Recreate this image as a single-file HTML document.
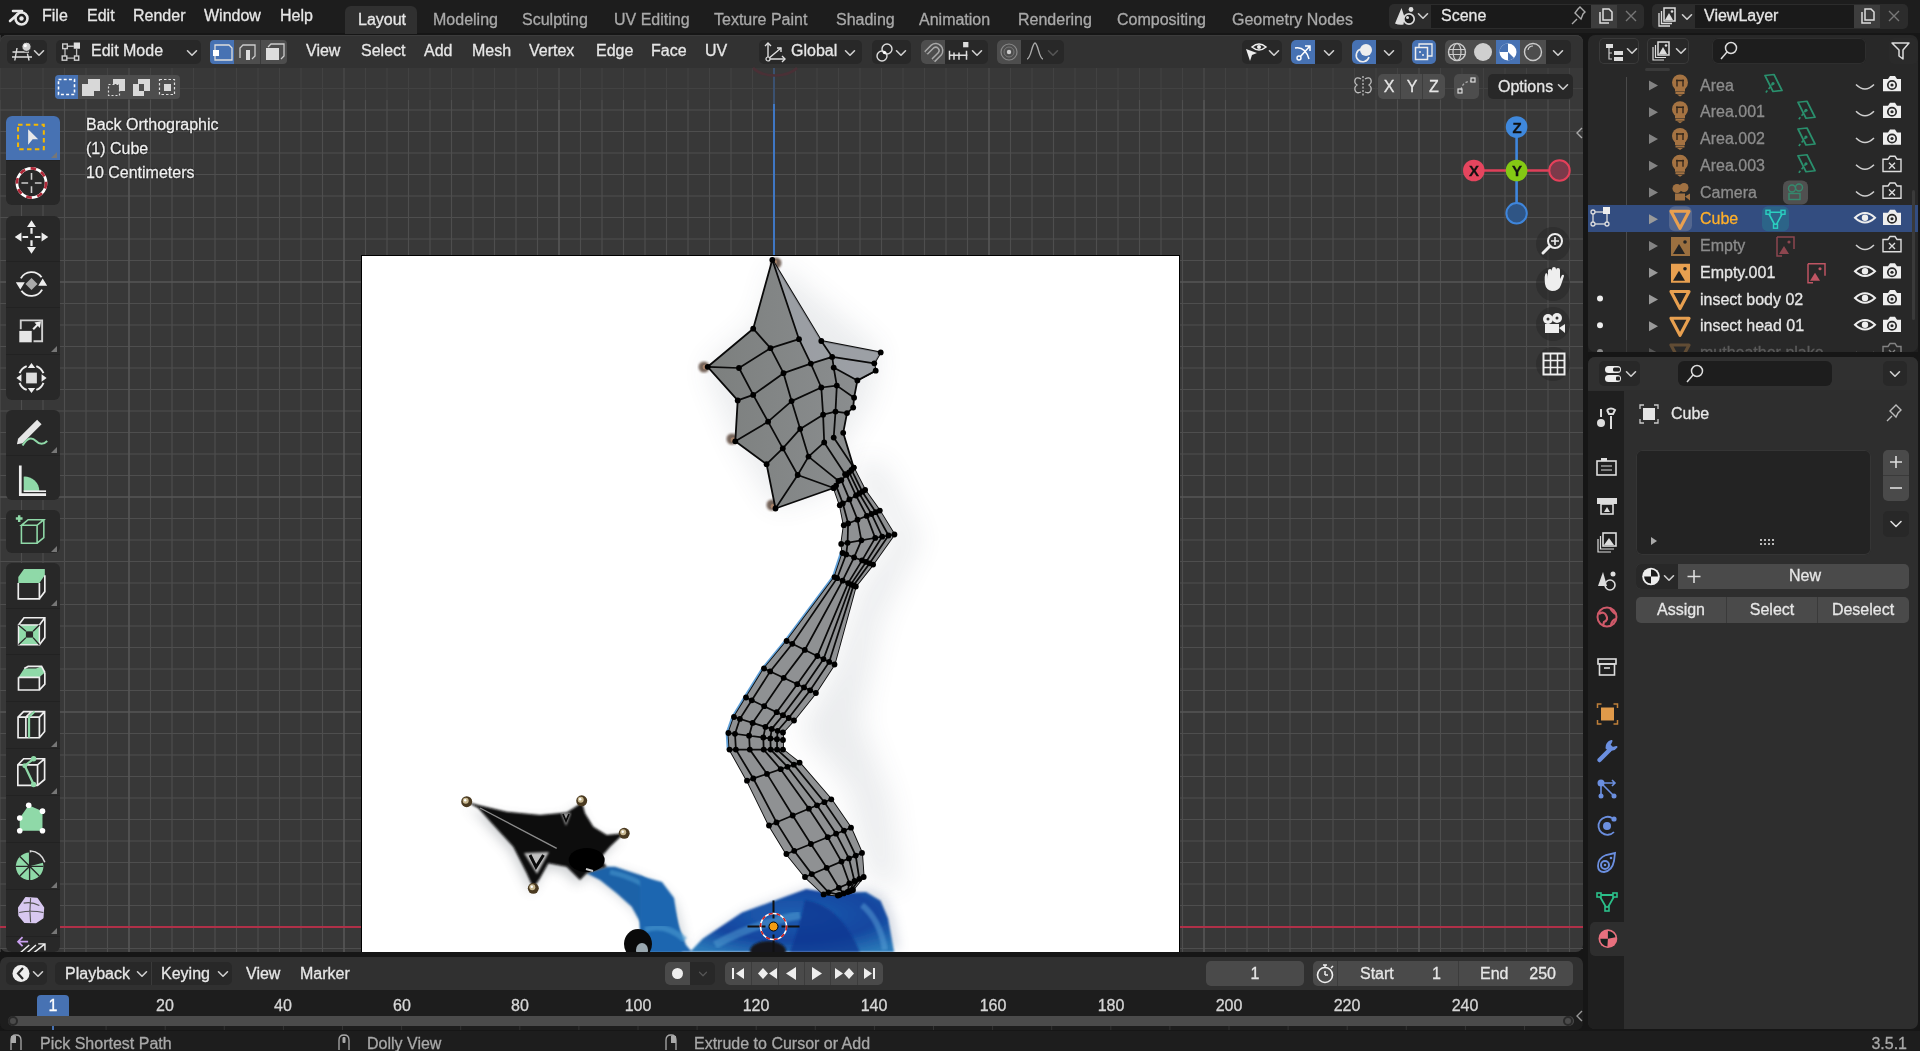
<!DOCTYPE html><html><head><meta charset="utf-8"><style>
html,body{margin:0;padding:0;width:1920px;height:1051px;overflow:hidden;background:#161616;}
.t{position:absolute;white-space:nowrap;font-family:"Liberation Sans",sans-serif;will-change:transform;-webkit-text-stroke:0.3px currentColor;}
.r{position:absolute;}
svg.r{overflow:visible;}
</style></head><body>
<div class="r" style="left:0px;top:0px;width:1920px;height:33px;background:#1d1d1d;border-radius:0px;"></div>
<svg class="r" style="left:8px;top:5px;" width="24" height="24" viewBox="0 0 24 24"><g fill="none" stroke="#e8e8e8" stroke-width="2.6"><circle cx="13.5" cy="13.5" r="6"/></g><circle cx="13.5" cy="13.5" r="2.2" fill="#e8e8e8"/><path d="M2 16 L10 9 M5 6 L14 6" stroke="#e8e8e8" stroke-width="2.6" stroke-linecap="round"/></svg>
<div class="t" style="left:42px;top:7.5px;font-size:16px;line-height:16px;color:#e6e6e6;">File</div>
<div class="t" style="left:87px;top:7.5px;font-size:16px;line-height:16px;color:#e6e6e6;">Edit</div>
<div class="t" style="left:133px;top:7.5px;font-size:16px;line-height:16px;color:#e6e6e6;">Render</div>
<div class="t" style="left:204px;top:7.5px;font-size:16px;line-height:16px;color:#e6e6e6;">Window</div>
<div class="t" style="left:280px;top:7.5px;font-size:16px;line-height:16px;color:#e6e6e6;">Help</div>
<div class="r" style="left:345px;top:6px;width:72px;height:28px;background:#303030;border-radius:6px;border-bottom-left-radius:0;border-bottom-right-radius:0;"></div>
<div class="t" style="left:357.5px;top:11.5px;font-size:16px;line-height:16px;color:#e6e6e6;">Layout</div>
<div class="t" style="left:432.5px;top:11.5px;font-size:16px;line-height:16px;color:#a9a9a9;">Modeling</div>
<div class="t" style="left:522px;top:11.5px;font-size:16px;line-height:16px;color:#a9a9a9;">Sculpting</div>
<div class="t" style="left:614px;top:11.5px;font-size:16px;line-height:16px;color:#a9a9a9;">UV Editing</div>
<div class="t" style="left:714px;top:11.5px;font-size:16px;line-height:16px;color:#a9a9a9;">Texture Paint</div>
<div class="t" style="left:836px;top:11.5px;font-size:16px;line-height:16px;color:#a9a9a9;">Shading</div>
<div class="t" style="left:919px;top:11.5px;font-size:16px;line-height:16px;color:#a9a9a9;">Animation</div>
<div class="t" style="left:1018px;top:11.5px;font-size:16px;line-height:16px;color:#a9a9a9;">Rendering</div>
<div class="t" style="left:1117px;top:11.5px;font-size:16px;line-height:16px;color:#a9a9a9;">Compositing</div>
<div class="t" style="left:1232px;top:11.5px;font-size:16px;line-height:16px;color:#a9a9a9;">Geometry Nodes</div>
<div class="r" style="left:1389px;top:4px;width:255px;height:25px;background:#2c2c2c;border-radius:5px;"></div>
<div class="r" style="left:1431px;top:5px;width:160px;height:23px;background:#1a1a1a;border-radius:0px;"></div>
<div class="r" style="left:1591px;top:5px;width:26px;height:23px;background:#3d3d3d;border-radius:0px;"></div>
<svg class="r" style="left:1392px;top:5px;" width="42" height="24" viewBox="0 0 42 24"><path d="M3 18.5 L9.5 3 L13.5 15 Q11 17 11.5 19.5 Q7 20.5 3 18.5Z" fill="#ddd"/><circle cx="19" cy="4.5" r="2.4" fill="#ddd"/><circle cx="17" cy="14" r="5.2" fill="#1d1d1d" stroke="#ddd" stroke-width="1.7"/><circle cx="15.5" cy="12.5" r="1.5" fill="#ddd"/><path d="M26.5 8.75L31 13.25L35.5 8.75" stroke="#d0d0d0" stroke-width="1.6" fill="none" stroke-linecap="round" stroke-linejoin="round"/></svg>
<div class="t" style="left:1441px;top:7.5px;font-size:16px;line-height:16px;color:#e6e6e6;">Scene</div>
<svg class="r" style="left:1596px;top:6px;" width="18" height="20" viewBox="0 0 18 20"><path d="M4 6 V17 H13 M7 3 H13 L16 6 V14 H7 Z" fill="none" stroke="#ddd" stroke-width="1.5"/></svg>
<svg class="r" style="left:1620px;top:6px;" width="22" height="20" viewBox="0 0 22 20"><path d="M6 5 L16 15 M16 5 L6 15" stroke="#777" stroke-width="1.4"/></svg>
<svg class="r" style="left:1568px;top:5px;" width="20" height="22" viewBox="0 0 20 22"><path d="M4 19 L9 14 M7 8 L13 14 L15 9 L17 7 L12 2 L10 4 Z" fill="none" stroke="#aaa" stroke-width="1.4"/></svg>
<div class="r" style="left:1652px;top:4px;width:256px;height:25px;background:#2c2c2c;border-radius:5px;"></div>
<div class="r" style="left:1695px;top:5px;width:159px;height:23px;background:#1a1a1a;border-radius:0px;"></div>
<div class="r" style="left:1854px;top:5px;width:26px;height:23px;background:#3d3d3d;border-radius:0px;"></div>
<svg class="r" style="left:1656px;top:5px;" width="40" height="24" viewBox="0 0 40 24"><path d="M3 8 V21 H14 M5.5 6 V18.5 H16" fill="none" stroke="#ddd" stroke-width="1.3"/><rect x="8" y="3" width="11" height="13" fill="none" stroke="#ddd" stroke-width="1.5"/><path d="M9 15 L13 8 L17 15Z" fill="#ddd"/><circle cx="16" cy="6.5" r="1.3" fill="#ddd"/><path d="M26.5 9.75L31 14.25L35.5 9.75" stroke="#d0d0d0" stroke-width="1.6" fill="none" stroke-linecap="round" stroke-linejoin="round"/></svg>
<div class="t" style="left:1704px;top:7.5px;font-size:16px;line-height:16px;color:#e6e6e6;">ViewLayer</div>
<svg class="r" style="left:1858px;top:6px;" width="18" height="20" viewBox="0 0 18 20"><path d="M4 6 V17 H13 M7 3 H13 L16 6 V14 H7 Z" fill="none" stroke="#ddd" stroke-width="1.5"/></svg>
<svg class="r" style="left:1883px;top:6px;" width="22" height="20" viewBox="0 0 22 20"><path d="M6 5 L16 15 M16 5 L6 15" stroke="#777" stroke-width="1.4"/></svg>
<div class="r" style="left:0px;top:35px;width:1583px;height:917px;background:#383838;border-radius:7px;"></div>
<svg class="r" style="left:0px;top:35px;overflow:hidden" width="1583" height="917" viewBox="0 0 1583 917"><path d="M0.0 0V917 M21.5 0V917 M43.0 0V917 M64.5 0V917 M86.0 0V917 M107.5 0V917 M129.0 0V917 M150.5 0V917 M172.0 0V917 M193.5 0V917 M215.0 0V917 M236.5 0V917 M258.0 0V917 M279.5 0V917 M301.0 0V917 M322.5 0V917 M344.0 0V917 M365.5 0V917 M387.0 0V917 M408.5 0V917 M430.0 0V917 M451.5 0V917 M473.0 0V917 M494.5 0V917 M516.0 0V917 M537.5 0V917 M559.0 0V917 M580.5 0V917 M602.0 0V917 M623.5 0V917 M645.0 0V917 M666.5 0V917 M688.0 0V917 M709.5 0V917 M731.0 0V917 M752.5 0V917 M774.0 0V917 M795.5 0V917 M817.0 0V917 M838.5 0V917 M860.0 0V917 M881.5 0V917 M903.0 0V917 M924.5 0V917 M946.0 0V917 M967.5 0V917 M989.0 0V917 M1010.5 0V917 M1032.0 0V917 M1053.5 0V917 M1075.0 0V917 M1096.5 0V917 M1118.0 0V917 M1139.5 0V917 M1161.0 0V917 M1182.5 0V917 M1204.0 0V917 M1225.5 0V917 M1247.0 0V917 M1268.5 0V917 M1290.0 0V917 M1311.5 0V917 M1333.0 0V917 M1354.5 0V917 M1376.0 0V917 M1397.5 0V917 M1419.0 0V917 M1440.5 0V917 M1462.0 0V917 M1483.5 0V917 M1505.0 0V917 M1526.5 0V917 M1548.0 0V917 M1569.5 0V917 M0 10.5H1583 M0 32.0H1583 M0 53.5H1583 M0 75.0H1583 M0 96.5H1583 M0 118.0H1583 M0 139.5H1583 M0 161.0H1583 M0 182.5H1583 M0 204.0H1583 M0 225.5H1583 M0 247.0H1583 M0 268.5H1583 M0 290.0H1583 M0 311.5H1583 M0 333.0H1583 M0 354.5H1583 M0 376.0H1583 M0 397.5H1583 M0 419.0H1583 M0 440.5H1583 M0 462.0H1583 M0 483.5H1583 M0 505.0H1583 M0 526.5H1583 M0 548.0H1583 M0 569.5H1583 M0 591.0H1583 M0 612.5H1583 M0 634.0H1583 M0 655.5H1583 M0 677.0H1583 M0 698.5H1583 M0 720.0H1583 M0 741.5H1583 M0 763.0H1583 M0 784.5H1583 M0 806.0H1583 M0 827.5H1583 M0 849.0H1583 M0 870.5H1583 M0 892.0H1583 M0 913.5H1583" stroke="#4e4e4e" stroke-width="1.15" fill="none"/><path d="M129.0 0V917 M344.0 0V917 M559.0 0V917 M989.0 0V917 M1204.0 0V917 M1419.0 0V917 M0 247.0H1583 M0 462.0H1583 M0 677.0H1583" stroke="#5a5a5a" stroke-width="1.15" fill="none"/></svg>
<div class="r" style="left:0px;top:68px;width:1583px;height:32px;background:rgba(56,56,56,0.55);border-radius:0px;"></div>
<div class="r" style="left:0px;top:35px;width:1583px;height:33px;background:#323232;border-radius:7px;border-bottom-left-radius:0;border-bottom-right-radius:0;box-shadow:inset 0 1px 0 #3c3c3c;"></div>
<div class="r" style="left:7px;top:40px;width:40px;height:24px;background:#282828;border-radius:5px;"></div>
<svg class="r" style="left:7px;top:40px;" width="40" height="24" viewBox="0 0 40 24"><path d="M5.5 12 H22 M5 17 H25 M10 8 L7.8 20.5 M20.4 13.6 L22.1 20.5" stroke="#ddd" stroke-width="1.4" fill="none"/><circle cx="19.5" cy="6.8" r="4.6" fill="#d0d0d0" stroke="#282828" stroke-width="1"/><circle cx="18.3" cy="5.6" r="1.6" fill="#fff"/><path d="M27.5 10.75L32 15.25L36.5 10.75" stroke="#d0d0d0" stroke-width="1.6" fill="none" stroke-linecap="round" stroke-linejoin="round"/></svg>
<div class="r" style="left:56px;top:40px;width:145px;height:24px;background:#282828;border-radius:5px;"></div>
<svg class="r" style="left:60px;top:40px;" width="30" height="24" viewBox="0 0 30 24"><path d="M7.5 6.25H13.75 M5 8.75V16.25 M6.9 18.1H14.4 M16.6 8.75V16.25" stroke="#bbb" stroke-width="1.3"/><g fill="none" stroke="#ccc" stroke-width="1.4"><rect x="2.7" y="4" width="4.6" height="4.6"/><rect x="2.2" y="16" width="4.6" height="4.2"/><rect x="14.5" y="16" width="4.2" height="4.2"/></g><rect x="13.75" y="2.5" width="6.25" height="6.25" fill="#e0e0e0"/></svg>
<div class="t" style="left:91px;top:42.5px;font-size:16px;line-height:16px;color:#e6e6e6;">Edit Mode</div>
<svg class="r" style="left:180px;top:40px;" width="20" height="24" viewBox="0 0 20 24"><path d="M7.5 10.75L12 15.25L16.5 10.75" stroke="#d0d0d0" stroke-width="1.6" fill="none" stroke-linecap="round" stroke-linejoin="round"/></svg>
<div class="r" style="left:210px;top:40px;width:24px;height:24px;background:#4772b3;border-radius:4px;border-top-right-radius:0;border-bottom-right-radius:0;"></div>
<div class="r" style="left:234px;top:40px;width:53px;height:24px;background:#4d4d4d;border-radius:4px;border-top-left-radius:0;border-bottom-left-radius:0;"></div>
<div class="r" style="left:260px;top:40px;width:1px;height:24px;background:#3a3a3a;border-radius:0px;"></div>
<svg class="r" style="left:210px;top:40px;" width="80" height="24" viewBox="0 0 80 24"><path d="M5 5 H19 L22 8 V20 H5 Z" fill="none" stroke="#ddd" stroke-width="1.3"/><rect x="3" y="10" width="6" height="6" fill="#fff"/><path d="M30 18 V8 L33 5 H45 V16 L42 19" fill="none" stroke="#ccc" stroke-width="1.3"/><rect x="36" y="10" width="4" height="10" fill="#ddd"/><path d="M58 7 L61 4 H74 V16 L71 19" fill="none" stroke="#ccc" stroke-width="1.3"/><rect x="56" y="8" width="13" height="12" fill="#ddd"/></svg>
<div class="t" style="left:306px;top:42.5px;font-size:16px;line-height:16px;color:#e6e6e6;">View</div>
<div class="t" style="left:361px;top:42.5px;font-size:16px;line-height:16px;color:#e6e6e6;">Select</div>
<div class="t" style="left:424px;top:42.5px;font-size:16px;line-height:16px;color:#e6e6e6;">Add</div>
<div class="t" style="left:472px;top:42.5px;font-size:16px;line-height:16px;color:#e6e6e6;">Mesh</div>
<div class="t" style="left:529px;top:42.5px;font-size:16px;line-height:16px;color:#e6e6e6;">Vertex</div>
<div class="t" style="left:596px;top:42.5px;font-size:16px;line-height:16px;color:#e6e6e6;">Edge</div>
<div class="t" style="left:651px;top:42.5px;font-size:16px;line-height:16px;color:#e6e6e6;">Face</div>
<div class="t" style="left:705px;top:42.5px;font-size:16px;line-height:16px;color:#e6e6e6;">UV</div>
<div class="r" style="left:759px;top:40px;width:103px;height:24px;background:#282828;border-radius:5px;"></div>
<svg class="r" style="left:759px;top:40px;" width="36" height="24" viewBox="0 0 36 24"><path d="M9 3 V19 H26 M9 19 L22 8" stroke="#ddd" stroke-width="1.4" fill="none"/><path d="M6 6 L9 3 L12 6 M23 16 L26 19 L23 22 M18 8 H22 V12" stroke="#ddd" stroke-width="1.4" fill="none"/><circle cx="9" cy="19" r="2" fill="#282828" stroke="#ddd" stroke-width="1.2"/></svg>
<div class="t" style="left:791px;top:42.5px;font-size:16px;line-height:16px;color:#e6e6e6;">Global</div>
<svg class="r" style="left:840px;top:40px;" width="20" height="24" viewBox="0 0 20 24"><path d="M5.5 10.75L10 15.25L14.5 10.75" stroke="#d0d0d0" stroke-width="1.6" fill="none" stroke-linecap="round" stroke-linejoin="round"/></svg>
<div class="r" style="left:872px;top:40px;width:39px;height:24px;background:#282828;border-radius:5px;"></div>
<svg class="r" style="left:872px;top:40px;" width="40" height="24" viewBox="0 0 40 24"><circle cx="10" cy="16" r="5" fill="none" stroke="#ddd" stroke-width="1.4"/><circle cx="15" cy="9" r="5" fill="none" stroke="#ddd" stroke-width="1.4"/><circle cx="12.5" cy="12.5" r="1.6" fill="#fff"/><path d="M24.5 10.75L29 15.25L33.5 10.75" stroke="#d0d0d0" stroke-width="1.6" fill="none" stroke-linecap="round" stroke-linejoin="round"/></svg>
<div class="r" style="left:921px;top:40px;width:67px;height:24px;background:#282828;border-radius:5px;"></div>
<div class="r" style="left:921px;top:40px;width:24px;height:24px;background:#4d4d4d;border-radius:5px;border-top-right-radius:0;border-bottom-right-radius:0;"></div>
<svg class="r" style="left:921px;top:40px;" width="68" height="24" viewBox="0 0 68 24"><path d="M5 13 L11.5 6.5 A5.2 5.2 0 0 1 18.8 13.8 L12.3 20.3" stroke="#a8a8a8" stroke-width="5.2" fill="none"/><path d="M5 13 L11.5 6.5 A5.2 5.2 0 0 1 18.8 13.8 L12.3 20.3" stroke="#4d4d4d" stroke-width="2.2" fill="none"/><path d="M28 15.2 H46.5 M28.5 10.8 V19.7 M33 12.5 V19.7 M38 12.5 V19.7 M45.5 10.8 V19.7" stroke="#ddd" stroke-width="1.5" fill="none"/><rect x="42.1" y="2" width="5.3" height="5.3" fill="#ddd"/><path d="M51.5 10.75L56 15.25L60.5 10.75" stroke="#d0d0d0" stroke-width="1.6" fill="none" stroke-linecap="round" stroke-linejoin="round"/></svg>
<div class="r" style="left:997px;top:40px;width:67px;height:24px;background:#282828;border-radius:5px;"></div>
<div class="r" style="left:997px;top:40px;width:24px;height:24px;background:#4d4d4d;border-radius:5px;border-top-right-radius:0;border-bottom-right-radius:0;"></div>
<svg class="r" style="left:997px;top:40px;" width="68" height="24" viewBox="0 0 68 24"><circle cx="12" cy="12" r="8" fill="none" stroke="#888" stroke-width="1.2"/><circle cx="12" cy="12" r="5" fill="none" stroke="#777" stroke-width="1"/><circle cx="12" cy="12" r="2.2" fill="#ccc"/><path d="M30 19 C34 19 35 3 38 3 C41 3 42 19 46 19" stroke="#aaa" stroke-width="1.4" fill="none"/><path d="M51.5 10.75L56 15.25L60.5 10.75" stroke="#555" stroke-width="1.6" fill="none" stroke-linecap="round" stroke-linejoin="round"/></svg>
<div class="r" style="left:1242px;top:40px;width:40px;height:24px;background:#282828;border-radius:5px;"></div>
<svg class="r" style="left:1242px;top:40px;" width="40" height="24" viewBox="0 0 40 24"><path d="M4 9 L15 13 L10 15 L8 21 Z" fill="#eee"/><path d="M10 7 Q17 1 24 7 Q17 13 10 7Z" fill="none" stroke="#eee" stroke-width="1.6"/><circle cx="17" cy="7" r="2" fill="#eee"/><path d="M27.5 10.75L32 15.25L36.5 10.75" stroke="#d0d0d0" stroke-width="1.6" fill="none" stroke-linecap="round" stroke-linejoin="round"/></svg>
<div class="r" style="left:1291px;top:40px;width:51px;height:24px;background:#282828;border-radius:5px;"></div>
<div class="r" style="left:1291px;top:40px;width:24px;height:24px;background:#4772b3;border-radius:5px;border-top-right-radius:0;border-bottom-right-radius:0;"></div>
<svg class="r" style="left:1291px;top:40px;" width="52" height="24" viewBox="0 0 52 24"><path d="M4 8 Q14 6 18 19" stroke="#fff" stroke-width="1.5" fill="none"/><path d="M9 17 L19 6 M14 6 H19 V11" stroke="#fff" stroke-width="1.5" fill="none"/><circle cx="8" cy="18" r="2" fill="#4772b3" stroke="#fff" stroke-width="1.4"/><path d="M33.5 10.75L38 15.25L42.5 10.75" stroke="#d0d0d0" stroke-width="1.6" fill="none" stroke-linecap="round" stroke-linejoin="round"/></svg>
<div class="r" style="left:1352px;top:40px;width:50px;height:24px;background:#282828;border-radius:5px;"></div>
<div class="r" style="left:1352px;top:40px;width:24px;height:24px;background:#4772b3;border-radius:5px;border-top-right-radius:0;border-bottom-right-radius:0;"></div>
<svg class="r" style="left:1352px;top:40px;" width="52" height="24" viewBox="0 0 52 24"><circle cx="14" cy="10" r="6" fill="#eee"/><path d="M9 9 A6.5 6.5 0 1 0 17 17" stroke="#eee" stroke-width="1.6" fill="none"/><path d="M32.5 10.75L37 15.25L41.5 10.75" stroke="#d0d0d0" stroke-width="1.6" fill="none" stroke-linecap="round" stroke-linejoin="round"/></svg>
<div class="r" style="left:1412px;top:40px;width:24px;height:24px;background:#4772b3;border-radius:5px;"></div>
<svg class="r" style="left:1412px;top:40px;" width="24" height="24" viewBox="0 0 24 24"><rect x="3.5" y="7.5" width="12" height="12" fill="none" stroke="#eee" stroke-width="1.5"/><path d="M7 7 V4 H20 V16 H16" stroke="#eee" stroke-width="1.3" fill="none"/><circle cx="8" cy="12" r="1" fill="#eee"/><circle cx="11" cy="15" r="1" fill="#eee"/></svg>
<div class="r" style="left:1445px;top:40px;width:126px;height:24px;background:#282828;border-radius:5px;"></div>
<div class="r" style="left:1445px;top:40px;width:101px;height:24px;background:#4d4d4d;border-radius:5px;border-top-right-radius:0;border-bottom-right-radius:0;"></div>
<div class="r" style="left:1496px;top:40px;width:24px;height:24px;background:#4772b3;border-radius:0px;"></div>
<svg class="r" style="left:1445px;top:40px;" width="126" height="24" viewBox="0 0 126 24"><circle cx="12" cy="12" r="8.5" fill="none" stroke="#ccc" stroke-width="1.4"/><ellipse cx="12" cy="12" rx="4" ry="8.5" fill="none" stroke="#ccc" stroke-width="1.2"/><path d="M3.5 9.5 H20.5 M3.5 14.5 H20.5" stroke="#ccc" stroke-width="1.2"/><circle cx="38" cy="12" r="9" fill="#cfcfcf"/><circle cx="63" cy="12" r="8.5" fill="#fff"/><path d="M63 12 V3.5 A8.5 8.5 0 0 0 54.5 12 Z" fill="#4772b3"/><path d="M63 12 L69 18 A8.5 8.5 0 0 1 63 20.5Z" fill="#4772b3"/><circle cx="88" cy="12" r="8.5" fill="none" stroke="#ccc" stroke-width="1.4"/><path d="M83 10 A5 5 0 0 1 88 6" stroke="#ccc" stroke-width="1.2" fill="none"/><path d="M108.5 10.75L113 15.25L117.5 10.75" stroke="#d0d0d0" stroke-width="1.6" fill="none" stroke-linecap="round" stroke-linejoin="round"/></svg>
<div class="r" style="left:55px;top:75px;width:125px;height:24px;background:#4d4d4d;border-radius:4px;"></div>
<div class="r" style="left:55px;top:75px;width:23px;height:24px;background:#4772b3;border-radius:4px;border-top-right-radius:0;border-bottom-right-radius:0;"></div>
<svg class="r" style="left:55px;top:75px;" width="125" height="24" viewBox="0 0 125 24"><rect x="3.5" y="4.5" width="16" height="15" fill="none" stroke="#fff" stroke-width="1.6" stroke-dasharray="3 2.2"/><path d="M27 9 H33 V4 H45 V16 H39 V21 H27 Z" fill="#d8d8d8"/><path d="M58 4 H70 V16 H64 V9 H58Z" fill="#d8d8d8"/><rect x="53.5" y="9.5" width="11" height="11" fill="none" stroke="#ddd" stroke-width="1.2" stroke-dasharray="2 2"/><path d="M83 4 H95 V16 H89 V9 H83Z M78 9 H84 V16 H89 V21 H78Z" fill="#d8d8d8"/><rect x="104.5" y="4.5" width="15" height="15" fill="none" stroke="#ddd" stroke-width="1.2" stroke-dasharray="2.5 2"/><rect x="109" y="9" width="7" height="7" fill="#d8d8d8"/></svg>
<svg class="r" style="left:1352px;top:74px;" width="22" height="24" viewBox="0 0 22 24"><path d="M11 2 V22" stroke="#ccc" stroke-width="1.2" stroke-dasharray="2 1.5"/><path d="M9 5 C3 1 1 8 5 11 C1 14 3 21 9 18 M13 5 C19 1 21 8 17 11 C21 14 19 21 13 18" stroke="#bbb" stroke-width="1.3" fill="none"/></svg>
<div class="r" style="left:1378px;top:74px;width:67px;height:25px;background:#4d4d4d;border-radius:5px;"></div>
<div class="r" style="left:1400px;top:74px;width:1px;height:25px;background:#3d3d3d;border-radius:0px;"></div>
<div class="r" style="left:1422px;top:74px;width:1px;height:25px;background:#3d3d3d;border-radius:0px;"></div>
<div class="t" style="left:1239px;width:300px;text-align:center;top:78.5px;font-size:16px;line-height:16px;color:#e6e6e6;">X</div>
<div class="t" style="left:1261.5px;width:300px;text-align:center;top:78.5px;font-size:16px;line-height:16px;color:#e6e6e6;">Y</div>
<div class="t" style="left:1284px;width:300px;text-align:center;top:78.5px;font-size:16px;line-height:16px;color:#e6e6e6;">Z</div>
<div class="r" style="left:1454px;top:74px;width:25px;height:25px;background:#4d4d4d;border-radius:5px;"></div>
<svg class="r" style="left:1454px;top:74px;" width="25" height="24" viewBox="0 0 25 24"><path d="M7 16 Q8 8 17 7" stroke="#aaa" stroke-width="1.3" fill="none" stroke-dasharray="2.5 2"/><rect x="4" y="15" width="4" height="4" fill="none" stroke="#ddd" stroke-width="1.2"/><rect x="17" y="4" width="4" height="4" fill="none" stroke="#ddd" stroke-width="1.2"/></svg>
<div class="r" style="left:1488px;top:74px;width:85px;height:25px;background:#282828;border-radius:5px;"></div>
<div class="t" style="left:1498px;top:78.5px;font-size:16px;line-height:16px;color:#e6e6e6;">Options</div>
<svg class="r" style="left:1553px;top:74px;" width="20" height="24" viewBox="0 0 20 24"><path d="M5.5 10.75L10 15.25L14.5 10.75" stroke="#d0d0d0" stroke-width="1.6" fill="none" stroke-linecap="round" stroke-linejoin="round"/></svg>
<div class="r" style="left:773px;top:68px;width:2px;height:188px;background:#3f77c4;border-radius:0px;"></div>
<div class="r" style="left:773px;top:68px;width:2px;height:36px;background:rgba(56,56,56,0.6);border-radius:0px;"></div>
<div class="r" style="left:0px;top:926px;width:362px;height:2px;background:#b03048;border-radius:0px;"></div>
<div class="r" style="left:1179px;top:926px;width:404px;height:2px;background:#b03048;border-radius:0px;"></div>
<svg class="r" style="left:745px;top:66px;" width="60" height="20" viewBox="0 0 60 20"><path d="M8 2 A26 16 0 0 0 52 2" stroke="#4a3036" stroke-width="2.5" fill="none"/></svg>
<div class="r" style="left:361px;top:255px;width:819px;height:697px;background:#000;border-radius:0px;"></div>
<div class="r" style="left:362px;top:256px;width:817px;height:696px;background:#ffffff;border-radius:0px;"></div>
<svg class="r" style="left:362px;top:256px;overflow:hidden" width="817" height="696" viewBox="0 0 817 696"><defs><radialGradient id="bl" cx="0.5" cy="0.4" r="0.7"><stop offset="0" stop-color="#1f5fb0"/><stop offset="0.6" stop-color="#1446a0"/><stop offset="1" stop-color="#2a78b8"/></radialGradient><linearGradient id="mg" x1="0" y1="0" x2="1" y2="0"><stop offset="0" stop-color="#7c7f7e"/><stop offset="1" stop-color="#8e9193"/></linearGradient><filter id="bl3"><feGaussianBlur stdDeviation="6"/></filter><filter id="bl9" x="-50%" y="-50%" width="200%" height="200%"><feGaussianBlur stdDeviation="14"/></filter><filter id="bl1"><feGaussianBlur stdDeviation="1.2"/></filter></defs><g filter="url(#bl3)" opacity="0.3"><polygon points="101.7,550.7 113.3,554.0 141.7,560.7 175.0,564.0 201.7,561.5 213.3,554.0 216.7,549.8 220.0,562.3 228.3,575.7 241.7,584.0 259.2,582.3 245.0,595.7 235.0,607.3 241.7,615.7 221.7,622.3 215.0,629.0 201.7,615.7 183.3,612.3 175.0,627.3 168.3,637.3 161.7,622.3 148.3,595.7 130.0,575.7 113.3,557.3" fill="#606870"/><polygon points="248.7,614.7 257.0,614.7 282.0,623.0 302.0,634.7 313.7,648.0 317.0,661.3 320.3,673.0 324.0,700.0 287.0,700.0 282.0,669.7 273.7,654.7 258.7,641.3 242.0,628.0 228.7,621.3" fill="#607080"/></g><polygon points="244.7,610.7 253.0,610.7 278.0,619.0 298.0,630.7 309.7,644.0 313.0,657.3 316.3,669.0 320.0,696.0 283.0,696.0 278.0,665.7 269.7,650.7 254.7,637.3 238.0,624.0 224.7,617.3" fill="#1d62a8" filter="url(#bl1)"/><path d="M248 616 Q283 624 300 644" stroke="#4a9ad0" stroke-width="5" fill="none" opacity="0.55" filter="url(#bl1)"/><g filter="url(#bl3)" opacity="0.3"><polygon points="333.0,694.0 345.7,680.7 385.0,654.5 428.8,638.5 449.3,631.0 473.0,635.0 509.0,634.0 523.6,642.8 531.0,660.3 536.8,692.4 537.0,694.0" fill="#7080a0"/></g><polygon points="328.0,696.0 340.7,682.7 380.0,656.5 423.8,640.5 444.3,633.0 468.0,637.0 504.0,636.0 518.6,644.8 526.0,662.3 531.8,694.4 532.0,696.0" fill="url(#bl)" filter="url(#bl1)"/><path d="M443 644 Q478 649 498 696 L428 696 Q438 669 443 644Z" fill="#0c3690" opacity="0.7" filter="url(#bl1)"/><path d="M353 689 Q388 669 438 659" stroke="#5aa8d8" stroke-width="8" fill="none" opacity="0.45" filter="url(#bl1)"/><polygon points="278.0,620.0 300.0,626.0 312.0,642.0 316.0,669.0 324.0,689.0 330.0,696.0 278.0,696.0" fill="#1f66b0" filter="url(#bl1)"/><path d="M283 674 Q303 666 323 684" stroke="#4a9ad0" stroke-width="6" fill="none" opacity="0.6" filter="url(#bl1)"/><path d="M500 649 Q518 664 523 694" stroke="#5aa0d8" stroke-width="6" fill="none" opacity="0.5" filter="url(#bl1)"/><ellipse cx="276" cy="688" rx="14" ry="15" fill="#0a0a0a"/><ellipse cx="280" cy="694" rx="6" ry="7" fill="#9aa8b0"/><ellipse cx="406" cy="695" rx="18" ry="10" fill="#15151c" filter="url(#bl1)"/><polygon points="104.7,545.7 116.3,549.0 144.7,555.7 178.0,559.0 204.7,556.5 216.3,549.0 219.7,544.8 223.0,557.3 231.3,570.7 244.7,579.0 262.2,577.3 248.0,590.7 238.0,602.3 244.7,610.7 224.7,617.3 218.0,624.0 204.7,610.7 186.3,607.3 178.0,622.3 171.3,632.3 164.7,617.3 151.3,590.7 133.0,570.7 116.3,552.3" fill="#080808" filter="url(#bl1)"/><ellipse cx="224.70000000000005" cy="604" rx="18" ry="12" fill="#000"/><path d="M118 552 L194.70000000000005 592.3" stroke="#9a9a9a" stroke-width="1.4" opacity="0.9"/><polygon points="162.0,597.0 187.0,596.0 175.0,618.0" fill="#c0c0c0" filter="url(#bl1)"/><path d="M168 599 L174 611 L181.5 599" stroke="#0a0a0a" stroke-width="3" fill="none"/><polygon points="199.0,557.0 209.0,557.0 204.0,570.0" fill="#9a9a9a" filter="url(#bl1)"/><path d="M201 558 L204 565 L207 558" stroke="#0a0a0a" stroke-width="1.8" fill="none"/><path d="M224 613 L231 615" stroke="#ccc" stroke-width="2"/><circle cx="104.69999999999999" cy="545.7" r="5.5" fill="#4a3a20"/><circle cx="103.69999999999999" cy="544.7" r="3" fill="#c8b890"/><circle cx="103.19999999999999" cy="544.2" r="1.2" fill="#fff"/><circle cx="219.70000000000005" cy="544.8" r="5.5" fill="#4a3a20"/><circle cx="218.70000000000005" cy="543.8" r="3" fill="#c8b890"/><circle cx="218.20000000000005" cy="543.3" r="1.2" fill="#fff"/><circle cx="262.20000000000005" cy="577.3" r="5.5" fill="#4a3a20"/><circle cx="261.20000000000005" cy="576.3" r="3" fill="#c8b890"/><circle cx="260.70000000000005" cy="575.8" r="1.2" fill="#fff"/><circle cx="171.29999999999995" cy="632.3" r="5.5" fill="#4a3a20"/><circle cx="170.29999999999995" cy="631.3" r="3" fill="#c8b890"/><circle cx="169.79999999999995" cy="630.8" r="1.2" fill="#fff"/><path d="M479.0 297.0 L471.0 321.1 L423.1 385.0 L400.5 412.5 L382.5 441.5 L370.5 461.0 L364.9 477.0 L366.0 493.6" stroke="#3a8ad0" stroke-width="2.5" fill="none" opacity="0.8"/><circle cx="414" cy="7" r="5.5" fill="#4a3020" opacity="0.75" filter="url(#bl1)"/><circle cx="412.4" cy="5.8" r="2.5" fill="#c09070" opacity="0.7"/><circle cx="342" cy="111" r="5.5" fill="#4a3020" opacity="0.75" filter="url(#bl1)"/><circle cx="343.2" cy="111.0" r="2.5" fill="#c09070" opacity="0.7"/><circle cx="370" cy="183" r="5.5" fill="#4a3020" opacity="0.75" filter="url(#bl1)"/><circle cx="371.2" cy="183.8" r="2.5" fill="#c09070" opacity="0.7"/><circle cx="410" cy="249" r="5.5" fill="#4a3020" opacity="0.75" filter="url(#bl1)"/><circle cx="411.2" cy="250.2" r="2.5" fill="#c09070" opacity="0.7"/><g filter="url(#bl9)" opacity="0.10"><polygon points="488.0,214.0 533.0,279.0 498.0,334.0 473.0,414.0 438.0,474.0 488.0,534.0 508.0,624.0 538.0,634.0 528.0,544.0 498.0,464.0 518.0,364.0 558.0,284.0 518.0,204.0" fill="#405060"/></g><g filter="url(#bl9)" opacity="0.10"><polygon points="343.0,111.0 398.0,64.0 413.0,6.0 518.0,94.0 508.0,144.0 483.0,184.0 468.0,234.0 413.0,252.0 373.0,184.0" fill="#405060"/></g><polygon points="410.3,3.8 459.3,85.0 518.7,96.4 512.3,107.3 513.7,114.7 495.4,124.4 492.1,141.7 491.2,151.6 485.0,157.1 481.2,176.8 491.7,211.6 503.1,234.0 517.8,254.6 532.4,278.5 511.1,308.6 493.8,330.5 472.5,408.5 453.9,437.0 432.0,464.5 421.0,476.5 421.0,484.0 421.0,493.6 437.6,506.7 469.3,543.3 489.0,571.7 500.0,596.9 501.7,621.0 491.0,634.0 475.9,639.5 461.6,638.4 443.0,621.0 424.4,598.0 407.0,569.5 385.0,524.7 367.5,493.6 366.4,477.0 372.0,461.0 384.0,441.5 402.0,412.5 424.6,385.0 472.5,321.1 480.5,297.0 479.2,287.9 481.8,269.2 477.8,249.2 471.7,232.0 413.5,252.5 404.6,208.2 373.3,185.3 375.7,144.4 345.7,110.8 391.2,72.7" fill="url(#mg)" stroke="#0a0a0a" stroke-width="1.8" stroke-linejoin="round"/><polygon points="491.7,211.6 503.1,234.0 517.8,254.6 532.4,278.5 511.1,308.6 493.8,330.5 472.5,408.5 453.9,437.0 432.0,464.5 421.0,476.5 421.0,484.0 421.0,493.6 437.6,506.7 469.3,543.3 489.0,571.7 500.0,596.9 501.7,621.0 491.0,634.0 475.9,639.5 461.6,638.4 443.0,621.0 424.4,598.0 407.0,569.5 385.0,524.7 367.5,493.6 366.4,477.0 372.0,461.0 384.0,441.5 402.0,412.5 424.6,385.0 472.5,321.1 480.5,297.0 479.2,287.9 481.8,269.2 477.8,249.2 471.7,232.0" fill="#8f9193"/><polygon points="410.3,3.8 459.3,85.0 470.2,100.9 448.8,107.6 437.0,83.2" fill="#a2a6ac" opacity="0.75"/><polygon points="459.3,85.0 518.7,96.4 512.3,107.3 470.2,100.9" fill="#a2a6ac" opacity="0.75"/><polygon points="512.3,107.3 513.7,114.7 495.4,124.4 471.7,111.6 470.2,100.9" fill="#a2a6ac" opacity="0.75"/><path d="M410.3 3.8L437.0 83.2 M391.2 72.7L408.5 92.2 M408.5 92.2L437.0 83.2 M437.0 83.2L448.8 107.6 M459.3 85.0L470.2 100.9 M448.8 107.6L470.2 100.9 M345.7 110.8L377.0 112.0 M377.0 112.0L408.5 92.2 M377.0 112.0L391.2 138.9 M375.7 144.4L391.2 138.9 M391.2 138.9L421.5 117.2 M408.5 92.2L421.5 117.2 M421.5 117.2L448.8 107.6 M470.2 100.9L512.3 107.3 M470.2 100.9L471.7 111.6 M471.7 111.6L495.4 124.4 M495.4 124.4L513.7 114.7 M421.5 117.2L429.6 145.1 M391.2 138.9L406.1 165.7 M373.3 185.3L406.1 165.7 M406.1 165.7L429.6 145.1 M429.6 145.1L459.3 131.5 M448.8 107.6L459.3 131.5 M459.3 131.5L474.8 129.6 M471.7 111.6L474.8 129.6 M474.8 129.6L492.1 141.7 M429.6 145.1L438.2 172.9 M406.1 165.7L420.8 192.4 M420.8 192.4L438.2 172.9 M438.2 172.9L461.1 158.7 M459.3 131.5L461.1 158.7 M461.1 158.7L473.5 155.6 M474.8 129.6L473.5 155.6 M473.5 155.6L485.0 157.1 M473.5 155.6L471.7 181.6 M461.1 158.7L462.2 186.4 M420.8 192.4L404.6 208.2 M420.8 192.4L435.7 219.0 M435.7 219.0L413.5 252.5 M435.7 219.0L446.5 200.6 M438.2 172.9L446.5 200.6 M446.5 200.6L462.2 186.4 M435.7 219.0L471.7 232.0 M446.5 200.6L476.5 224.9 M462.2 186.4L483.1 218.2 M471.7 181.6L491.7 211.6 M471.7 232.0L491.7 211.6 M477.8 249.2L503.1 234.0 M481.8 269.2L517.8 254.6 M479.2 287.9L532.4 278.5 M480.5 297.0L511.1 308.6 M472.5 321.1L493.8 330.5 M424.6 385.0L472.5 408.5 M402.0 412.5L453.9 437.0 M384.0 441.5L432.0 464.5 M372.0 461.0L421.0 476.5 M366.4 477.0L421.0 484.0 M367.5 493.6L421.0 493.6 M385.0 524.7L437.6 506.7 M407.0 569.5L469.3 543.3 M424.4 598.0L489.0 571.7 M443.0 621.0L500.0 596.9 M461.6 638.4L501.7 621.0 M475.9 639.5L491.0 634.0 M474.1 229.6L480.8 247.4L486.1 267.4L485.6 286.8L484.2 298.4L475.1 322.2L430.3 387.8L408.2 415.4L389.8 444.3L377.9 462.9L373.0 477.8L373.9 493.6L391.3 522.5L414.5 566.4L432.2 594.8L449.8 618.1L466.4 636.3L477.7 638.8 M479.3 224.2L487.4 243.4L495.5 263.7L499.4 284.3L492.1 301.4L480.6 324.7L442.8 393.9L421.7 421.8L402.2 450.2L390.6 466.9L387.1 479.7L387.8 493.6L405.0 517.9L430.7 559.5L448.9 588.0L464.7 611.8L476.8 631.8L481.6 637.4 M484.5 218.9L494.0 239.5L504.8 259.9L513.2 281.9L500.1 304.4L486.1 327.1L455.3 400.0L435.2 428.2L414.7 456.2L403.4 470.9L401.3 481.5L401.7 493.6L418.7 513.2L446.9 552.7L465.7 581.2L479.5 605.6L487.3 627.3L485.6 636.0 M487.1 216.3L497.3 237.5L509.5 258.0L520.2 280.7L504.1 305.9L488.9 328.3L461.5 403.1L442.0 431.4L421.0 459.2L409.7 472.9L408.4 482.4L408.7 493.6L425.5 510.8L455.0 549.3L474.1 577.7L486.9 602.4L492.5 625.0L487.5 635.3 M489.5 213.8L500.3 235.7L513.8 256.2L526.5 279.5L507.7 307.3L491.5 329.5L467.2 405.9L448.2 434.3L426.7 462.0L415.6 474.8L415.0 483.2L415.1 493.6L431.8 508.7L462.4 546.2L481.9 574.6L493.7 599.6L497.3 622.9L489.3 634.6" stroke="#0a0a0a" stroke-width="1.75" fill="none" stroke-linecap="round"/><g fill="#000"><circle cx="471.7" cy="232.0" r="2.9"/><circle cx="474.1" cy="229.6" r="2.9"/><circle cx="479.3" cy="224.2" r="2.9"/><circle cx="484.5" cy="218.9" r="2.9"/><circle cx="487.1" cy="216.3" r="2.9"/><circle cx="489.5" cy="213.8" r="2.9"/><circle cx="491.7" cy="211.6" r="2.9"/><circle cx="477.8" cy="249.2" r="2.9"/><circle cx="480.8" cy="247.4" r="2.9"/><circle cx="487.4" cy="243.4" r="2.9"/><circle cx="494.0" cy="239.5" r="2.9"/><circle cx="497.3" cy="237.5" r="2.9"/><circle cx="500.3" cy="235.7" r="2.9"/><circle cx="503.1" cy="234.0" r="2.9"/><circle cx="481.8" cy="269.2" r="2.9"/><circle cx="486.1" cy="267.4" r="2.9"/><circle cx="495.5" cy="263.7" r="2.9"/><circle cx="504.8" cy="259.9" r="2.9"/><circle cx="509.5" cy="258.0" r="2.9"/><circle cx="513.8" cy="256.2" r="2.9"/><circle cx="517.8" cy="254.6" r="2.9"/><circle cx="479.2" cy="287.9" r="2.9"/><circle cx="485.6" cy="286.8" r="2.9"/><circle cx="499.4" cy="284.3" r="2.9"/><circle cx="513.2" cy="281.9" r="2.9"/><circle cx="520.2" cy="280.7" r="2.9"/><circle cx="526.5" cy="279.5" r="2.9"/><circle cx="532.4" cy="278.5" r="2.9"/><circle cx="480.5" cy="297.0" r="2.9"/><circle cx="484.2" cy="298.4" r="2.9"/><circle cx="492.1" cy="301.4" r="2.9"/><circle cx="500.1" cy="304.4" r="2.9"/><circle cx="504.1" cy="305.9" r="2.9"/><circle cx="507.7" cy="307.3" r="2.9"/><circle cx="511.1" cy="308.6" r="2.9"/><circle cx="472.5" cy="321.1" r="2.9"/><circle cx="475.1" cy="322.2" r="2.9"/><circle cx="480.6" cy="324.7" r="2.9"/><circle cx="486.1" cy="327.1" r="2.9"/><circle cx="488.9" cy="328.3" r="2.9"/><circle cx="491.5" cy="329.5" r="2.9"/><circle cx="493.8" cy="330.5" r="2.9"/><circle cx="424.6" cy="385.0" r="2.9"/><circle cx="430.3" cy="387.8" r="2.9"/><circle cx="442.8" cy="393.9" r="2.9"/><circle cx="455.3" cy="400.0" r="2.9"/><circle cx="461.5" cy="403.1" r="2.9"/><circle cx="467.2" cy="405.9" r="2.9"/><circle cx="472.5" cy="408.5" r="2.9"/><circle cx="402.0" cy="412.5" r="2.9"/><circle cx="408.2" cy="415.4" r="2.9"/><circle cx="421.7" cy="421.8" r="2.9"/><circle cx="435.2" cy="428.2" r="2.9"/><circle cx="442.0" cy="431.4" r="2.9"/><circle cx="448.2" cy="434.3" r="2.9"/><circle cx="453.9" cy="437.0" r="2.9"/><circle cx="384.0" cy="441.5" r="2.9"/><circle cx="389.8" cy="444.3" r="2.9"/><circle cx="402.2" cy="450.2" r="2.9"/><circle cx="414.7" cy="456.2" r="2.9"/><circle cx="421.0" cy="459.2" r="2.9"/><circle cx="426.7" cy="462.0" r="2.9"/><circle cx="432.0" cy="464.5" r="2.9"/><circle cx="372.0" cy="461.0" r="2.9"/><circle cx="377.9" cy="462.9" r="2.9"/><circle cx="390.6" cy="466.9" r="2.9"/><circle cx="403.4" cy="470.9" r="2.9"/><circle cx="409.7" cy="472.9" r="2.9"/><circle cx="415.6" cy="474.8" r="2.9"/><circle cx="421.0" cy="476.5" r="2.9"/><circle cx="366.4" cy="477.0" r="2.9"/><circle cx="373.0" cy="477.8" r="2.9"/><circle cx="387.1" cy="479.7" r="2.9"/><circle cx="401.3" cy="481.5" r="2.9"/><circle cx="408.4" cy="482.4" r="2.9"/><circle cx="415.0" cy="483.2" r="2.9"/><circle cx="421.0" cy="484.0" r="2.9"/><circle cx="367.5" cy="493.6" r="2.9"/><circle cx="373.9" cy="493.6" r="2.9"/><circle cx="387.8" cy="493.6" r="2.9"/><circle cx="401.7" cy="493.6" r="2.9"/><circle cx="408.7" cy="493.6" r="2.9"/><circle cx="415.1" cy="493.6" r="2.9"/><circle cx="421.0" cy="493.6" r="2.9"/><circle cx="385.0" cy="524.7" r="2.9"/><circle cx="391.3" cy="522.5" r="2.9"/><circle cx="405.0" cy="517.9" r="2.9"/><circle cx="418.7" cy="513.2" r="2.9"/><circle cx="425.5" cy="510.8" r="2.9"/><circle cx="431.8" cy="508.7" r="2.9"/><circle cx="437.6" cy="506.7" r="2.9"/><circle cx="407.0" cy="569.5" r="2.9"/><circle cx="414.5" cy="566.4" r="2.9"/><circle cx="430.7" cy="559.5" r="2.9"/><circle cx="446.9" cy="552.7" r="2.9"/><circle cx="455.0" cy="549.3" r="2.9"/><circle cx="462.4" cy="546.2" r="2.9"/><circle cx="469.3" cy="543.3" r="2.9"/><circle cx="424.4" cy="598.0" r="2.9"/><circle cx="432.2" cy="594.8" r="2.9"/><circle cx="448.9" cy="588.0" r="2.9"/><circle cx="465.7" cy="581.2" r="2.9"/><circle cx="474.1" cy="577.7" r="2.9"/><circle cx="481.9" cy="574.6" r="2.9"/><circle cx="489.0" cy="571.7" r="2.9"/><circle cx="443.0" cy="621.0" r="2.9"/><circle cx="449.8" cy="618.1" r="2.9"/><circle cx="464.7" cy="611.8" r="2.9"/><circle cx="479.5" cy="605.6" r="2.9"/><circle cx="486.9" cy="602.4" r="2.9"/><circle cx="493.7" cy="599.6" r="2.9"/><circle cx="500.0" cy="596.9" r="2.9"/><circle cx="461.6" cy="638.4" r="2.9"/><circle cx="466.4" cy="636.3" r="2.9"/><circle cx="476.8" cy="631.8" r="2.9"/><circle cx="487.3" cy="627.3" r="2.9"/><circle cx="492.5" cy="625.0" r="2.9"/><circle cx="497.3" cy="622.9" r="2.9"/><circle cx="501.7" cy="621.0" r="2.9"/><circle cx="475.9" cy="639.5" r="2.9"/><circle cx="477.7" cy="638.8" r="2.9"/><circle cx="481.6" cy="637.4" r="2.9"/><circle cx="485.6" cy="636.0" r="2.9"/><circle cx="487.5" cy="635.3" r="2.9"/><circle cx="489.3" cy="634.6" r="2.9"/><circle cx="491.0" cy="634.0" r="2.9"/><circle cx="410.3" cy="3.8" r="2.9"/><circle cx="391.2" cy="72.7" r="2.9"/><circle cx="437.0" cy="83.2" r="2.9"/><circle cx="459.3" cy="85.0" r="2.9"/><circle cx="518.7" cy="96.4" r="2.9"/><circle cx="408.5" cy="92.2" r="2.9"/><circle cx="345.7" cy="110.8" r="2.9"/><circle cx="377.0" cy="112.0" r="2.9"/><circle cx="421.5" cy="117.2" r="2.9"/><circle cx="448.8" cy="107.6" r="2.9"/><circle cx="470.2" cy="100.9" r="2.9"/><circle cx="471.7" cy="111.6" r="2.9"/><circle cx="512.3" cy="107.3" r="2.9"/><circle cx="513.7" cy="114.7" r="2.9"/><circle cx="495.4" cy="124.4" r="2.9"/><circle cx="375.7" cy="144.4" r="2.9"/><circle cx="391.2" cy="138.9" r="2.9"/><circle cx="429.6" cy="145.1" r="2.9"/><circle cx="459.3" cy="131.5" r="2.9"/><circle cx="474.8" cy="129.6" r="2.9"/><circle cx="492.1" cy="141.7" r="2.9"/><circle cx="491.2" cy="151.6" r="2.9"/><circle cx="373.3" cy="185.3" r="2.9"/><circle cx="406.1" cy="165.7" r="2.9"/><circle cx="438.2" cy="172.9" r="2.9"/><circle cx="461.1" cy="158.7" r="2.9"/><circle cx="473.5" cy="155.6" r="2.9"/><circle cx="485.0" cy="157.1" r="2.9"/><circle cx="481.2" cy="176.8" r="2.9"/><circle cx="471.7" cy="181.6" r="2.9"/><circle cx="462.2" cy="186.4" r="2.9"/><circle cx="420.8" cy="192.4" r="2.9"/><circle cx="404.6" cy="208.2" r="2.9"/><circle cx="446.5" cy="200.6" r="2.9"/><circle cx="435.7" cy="219.0" r="2.9"/><circle cx="413.5" cy="252.5" r="2.9"/><circle cx="476.5" cy="224.9" r="2.9"/><circle cx="471.7" cy="232.0" r="2.9"/><circle cx="483.1" cy="218.2" r="2.9"/><circle cx="491.7" cy="211.6" r="2.9"/></g><path d="M385.5 670.5H403.5 M419.5 670.5H437.5 M411.5 644.5V662.5 M411.5 678.5V696.5" stroke="#111" stroke-width="2"/><circle cx="411.5" cy="670.5" r="13" fill="none" stroke="#fff" stroke-width="1.6"/><circle cx="411.5" cy="670.5" r="13" fill="none" stroke="#d02020" stroke-width="1.6" stroke-dasharray="4 4"/><circle cx="411.5" cy="670.5" r="4.5" fill="#f39c12" stroke="#000" stroke-width="1"/></svg>
<div class="t" style="left:86px;top:116.5px;font-size:16px;line-height:16px;color:#f0f0f0;text-shadow:0 0 2px #000,0 0 1px #000;">Back Orthographic</div>
<div class="t" style="left:86px;top:141.1px;font-size:16px;line-height:16px;color:#f0f0f0;text-shadow:0 0 2px #000,0 0 1px #000;">(1) Cube</div>
<div class="t" style="left:86px;top:165.2px;font-size:16px;line-height:16px;color:#f0f0f0;text-shadow:0 0 2px #000,0 0 1px #000;">10 Centimeters</div>
<div class="r" style="left:6px;top:116px;width:54px;height:89px;background:#282828;border-radius:6px;"></div>
<div class="r" style="left:6px;top:216px;width:54px;height:184px;background:#282828;border-radius:6px;"></div>
<div class="r" style="left:6px;top:410px;width:54px;height:90px;background:#282828;border-radius:6px;"></div>
<div class="r" style="left:6px;top:510px;width:54px;height:43px;background:#282828;border-radius:6px;"></div>
<div class="r" style="left:6px;top:563px;width:54px;height:389px;background:#282828;border-radius:6px;"></div>
<div class="r" style="left:6px;top:116px;width:54px;height:44px;background:#4772b3;border-radius:6px;border-bottom-left-radius:0;border-bottom-right-radius:0;"></div>
<div class="r" style="left:6px;top:160px;width:54px;height:1px;background:#222222;border-radius:0px;"></div>
<div class="r" style="left:6px;top:261px;width:54px;height:1px;background:#222222;border-radius:0px;"></div>
<div class="r" style="left:6px;top:307px;width:54px;height:1px;background:#222222;border-radius:0px;"></div>
<div class="r" style="left:6px;top:354px;width:54px;height:1px;background:#222222;border-radius:0px;"></div>
<div class="r" style="left:6px;top:455px;width:54px;height:1px;background:#222222;border-radius:0px;"></div>
<div class="r" style="left:6px;top:608px;width:54px;height:1px;background:#222222;border-radius:0px;"></div>
<div class="r" style="left:6px;top:654px;width:54px;height:1px;background:#222222;border-radius:0px;"></div>
<div class="r" style="left:6px;top:701px;width:54px;height:1px;background:#222222;border-radius:0px;"></div>
<div class="r" style="left:6px;top:748px;width:54px;height:1px;background:#222222;border-radius:0px;"></div>
<div class="r" style="left:6px;top:795px;width:54px;height:1px;background:#222222;border-radius:0px;"></div>
<div class="r" style="left:6px;top:842px;width:54px;height:1px;background:#222222;border-radius:0px;"></div>
<div class="r" style="left:6px;top:889px;width:54px;height:1px;background:#222222;border-radius:0px;"></div>
<div class="r" style="left:6px;top:936px;width:54px;height:1px;background:#222222;border-radius:0px;"></div>
<svg class="r" style="left:0px;top:0px;overflow:hidden;height:952px" width="70" height="952" viewBox="0 0 70 952"><g transform="translate(31.5,137) scale(1.12)"><rect x="-12" y="-11" width="23" height="22" fill="none" stroke="#f5b800" stroke-width="1.8" stroke-dasharray="4 3"/><path d="M-3 -7 L6 2 L1 2 L-3 7 Z" fill="#e8e8e8"/></g><g transform="translate(31.5,183) scale(1.12)"><circle r="13" fill="none" stroke="#fff" stroke-width="2.4"/><circle r="13" fill="none" stroke="#b02838" stroke-width="2.4" stroke-dasharray="5 5"/><path d="M-9 0H-3 M3 0H9 M0 -9V-3 M0 3V9" stroke="#ccc" stroke-width="1.4"/></g><g transform="translate(31.5,237) scale(1.12)"><path d="M0 -15 L-4 -9 H4Z M0 15 L-4 9 H4Z M-15 0 L-9 -4 V4Z M15 0 L9 -4 V4Z" fill="#eee"/><path d="M0 -8V-3 M0 3V8 M-8 0H-3 M3 0H8" stroke="#eee" stroke-width="2"/></g><g transform="translate(31.5,284) scale(1.12)"><path d="M-9.5 -5 A11 11 0 0 1 9 -6 M9.5 5 A11 11 0 0 1 -9 6" stroke="#eee" stroke-width="1.7" fill="none"/><path d="M-14 -1.5 L-6 -1.5 L-10 5Z M14 1.5 L6 1.5 L10 -5Z" fill="#eee"/><rect x="-3.8" y="-3.8" width="7.6" height="7.6" transform="rotate(45)" fill="#aaa"/></g><g transform="translate(31.5,331) scale(1.12)"><rect x="-10.9" y="-0.1" width="11.1" height="10.2" fill="#e6e6e6"/><path d="M-9.6 -1.5 V-9.5 H9.5 V9.2 H1.8" stroke="#d0d0d0" stroke-width="1.7" fill="none"/><path d="M1.5 -1.6 L7.2 -7.3" stroke="#eee" stroke-width="1.8"/><path d="M8.5 -8.6 L2.6 -7.6 L7.5 -2.7Z" fill="#eee"/></g><g transform="translate(31.5,378) scale(1.12)"><path d="M10.7 4.3 A11.5 11.5 0 0 1 4.3 10.7 M-4.3 10.7 A11.5 11.5 0 0 1 -10.7 4.3 M-10.7 -4.3 A11.5 11.5 0 0 1 -4.3 -10.7 M4.3 -10.7 A11.5 11.5 0 0 1 10.7 -4.3 " stroke="#eee" stroke-width="1.7" fill="none"/><rect x="-4.8" y="-4.8" width="9.6" height="9.6" fill="#ddd"/><path d="M0 -13.5 L-3.3 -9 H3.3Z M0 13.5 L-3.3 9 H3.3Z M-13.5 0 L-9 -3.3 V3.3Z M13.5 0 L9 -3.3 V3.3Z" fill="#eee"/></g><g transform="translate(31.5,432) scale(1.12)"><path d="M-12 6 L5 -11 L9 -7 L-8 10 L-13 11 Z" fill="#e6e6e6"/><path d="M-8 12 Q-2 2 4 8 Q9 13 14 8" stroke="#8fd9a8" stroke-width="1.8" fill="none"/></g><g transform="translate(31.5,480) scale(1.12)"><path d="M-10 -13 V13 H13" stroke="#eee" stroke-width="2.4" fill="none"/><path d="M-7 10 V-3 A13 13 0 0 1 7 10 Z" fill="#8fd9a8"/><path d="M-7 10 H13" stroke="#eee" stroke-width="1.5"/></g><g transform="translate(31.5,532) scale(1.12)"><path d="M-9 -6 H5 L11 -11 H-3Z" fill="none" stroke="#8fd9a8" stroke-width="1.4"/><path d="M-9 -6 V10 H5 V-6 M5 10 L11 5 V-11" fill="none" stroke="#8fd9a8" stroke-width="1.4"/><path d="M-14 -12 H-8 M-11 -15 V-9" stroke="#8fd9a8" stroke-width="2.2"/></g><g transform="translate(31.5,583) scale(1.12)"><path d="M-11.8 -5.4 L-6.7 -12.5 H11.9 L7.05 -5.4 Z M-11.8 -5.4 H7.05 V0 H-11.8Z M7.05 -5.4 L11.9 -12.5 V-7 L7.05 0Z" fill="#8fd9a8"/><path d="M-11.8 0 V14.1 H7.05 V0 M7.05 14.1 L11.9 7.7 V-7" stroke="#eee" stroke-width="1.5" fill="none"/></g><g transform="translate(31.5,631) scale(1.12)"><path d="M-11.6 -5.4 L-6.7 -11.8 H11.9 V5.9 L7.05 12.3 M7.05 -5.4 L11.9 -11.8" stroke="#eee" stroke-width="1.5" fill="none"/><rect x="-11.6" y="-5.4" width="18.65" height="17.7" fill="#8fd9a8" stroke="#eee" stroke-width="1.3"/><path d="M-11.6 -5.4 L-5 0.3 M7.05 -5.4 L1.4 0.3 M-11.6 12.3 L-5 5.9 M7.05 12.3 L1.4 5.9" stroke="#282828" stroke-width="1.2"/><rect x="-5" y="0.3" width="6.4" height="5.6" fill="#282828"/></g><g transform="translate(31.5,678) scale(1.12)"><path d="M-11.6 -0.6 L-6.5 -8.5 H4 L7.05 -0.6Z M4 -8.5 L9 -10.5 L11.9 -5 L7.05 -0.6Z" fill="#8fd9a8"/><path d="M-6.5 -8.5 L-3 -10.3 H9 L11.9 -5 M-11.6 -0.6 V10.7 H7.05 V-0.6 H-11.6 M7.05 10.7 L11.9 5.5 V-5" stroke="#eee" stroke-width="1.5" fill="none"/></g><g transform="translate(31.5,725) scale(1.12)"><path d="M-12 -7.1 L-7.1 -12 H11.7 V5.8 L7.05 11.4 H-12Z M-12 -7.1 H7.05 V11.4 M7.05 -7.1 L11.7 -12 M-5 -7.1 V11.4 M-5 -7.1 L0 -12" stroke="#eee" stroke-width="1.5" fill="none"/><path d="M-2.2 -7.1 V11.4 M-2.2 -7.1 L2.8 -12" stroke="#8fd9a8" stroke-width="2"/></g><g transform="translate(31.5,772) scale(1.12)"><path d="M-12.2 -6.4 L-7 -11.8 H11.7 V6.7 L5.4 12 H-12.2Z M-12.2 -6.4 H5.4 V12 M5.4 -6.4 L11.7 -11.8" stroke="#eee" stroke-width="1.5" fill="none"/><path d="M1.9 -11.8 L-6 -5.6 L1.9 11.2" stroke="#8fd9a8" stroke-width="2" fill="none"/><g fill="#8fd9a8"><circle cx="1.9" cy="-11.8" r="2.4"/><circle cx="-6" cy="-5.6" r="2.2"/><circle cx="1.9" cy="11.2" r="2.4"/></g></g><g transform="translate(31.5,819) scale(1.12)"><path d="M-2.5 -12.3 L9.8 -7 L9.8 10.5 L-10.5 10.5 L-10.5 -0.9Z" fill="#8fd9a8"/><g fill="#fff"><circle cx="-2.5" cy="-12.3" r="2.5"/><circle cx="9.8" cy="-7" r="2.5"/><circle cx="9.8" cy="10.5" r="2.5"/><circle cx="-10.5" cy="10.5" r="2.5"/><circle cx="-10.5" cy="-0.9" r="2.5"/></g></g><g transform="translate(31.5,865) scale(1.12)"><path d="M-1.7 1.2 V-11.100000000000001 A12.3 12.3 0 1 0 10.2 -2.0 Z" fill="#8fd9a8"/><path d="M-0.8999999999999999 -11.100000000000001 V-12.600000000000001 A14.100000000000001 14.100000000000001 0 0 1 11.9 -2.4" stroke="#ddd" stroke-width="1.3" fill="none"/><path d="M-1.7 1.2 L10.6 1.2 M-1.7 1.2 L7.0 9.9 M-1.7 1.2 L-1.7 13.5 M-1.7 1.2 L-10.4 9.9 M-1.7 1.2 L-14.0 1.2 M-1.7 1.2 L-10.4 -7.5 M-1.7 1.2 L-1.7 -11.1" stroke="#282828" stroke-width="1.2"/></g><g transform="translate(31.5,911) scale(1.12)"><path d="M-11.3 -3 L-5 -11.8 L5 -11 L10.6 -3 L10 6 L4 10.2 L-6 10 L-11 4Z" fill="#d8c8f0" stroke="#d8c8f0" stroke-width="1.5" stroke-linejoin="round"/><path d="M-11 1.4 Q0 -1 10.6 1.4 M-0.8 -11.5 Q-2 0 -0.8 10 M-7 -7 Q0 -8.5 7 -5" stroke="#555" stroke-width="1" fill="none"/></g><g transform="translate(31.5,945) scale(1.12)"><path d="M-12 -3 L-3 -3 M-8 -7 L-12 -3 L-8 1" stroke="#c9a0ef" stroke-width="1.6" fill="none"/><path d="M-10 7 L-2 0 M-4 7 L4 0 M2 7 L12 -1 M6 -1 H12 V5" stroke="#eee" stroke-width="1.3" fill="none"/></g><path d="M57 152 L57 158 L51 158Z" fill="#777"/><path d="M57 346 L57 352 L51 352Z" fill="#777"/><path d="M57 447 L57 453 L51 453Z" fill="#777"/><path d="M57 546 L57 552 L51 552Z" fill="#777"/><path d="M57 600 L57 606 L51 606Z" fill="#777"/><path d="M57 741 L57 747 L51 747Z" fill="#777"/><path d="M57 788 L57 794 L51 794Z" fill="#777"/><path d="M57 882 L57 888 L51 888Z" fill="#777"/><path d="M57 928 L57 934 L51 934Z" fill="#777"/></svg>
<svg class="r" style="left:0px;top:0px;overflow:hidden" width="1583" height="952" viewBox="0 0 1583 952"><path d="M1473.8 170.5H1559.5" stroke="#e0405a" stroke-width="2.6"/><path d="M1516.6 127V213.3" stroke="#3f86dc" stroke-width="2.6"/><circle cx="1516.6" cy="213.3" r="10.2" fill="#2f5585" stroke="#3f86dc" stroke-width="2"/><circle cx="1559.5" cy="170.5" r="10.2" fill="#7a3a4a" stroke="#e5405a" stroke-width="2"/><circle cx="1516.6" cy="127" r="10.8" fill="#3f88dc"/><circle cx="1473.8" cy="170.5" r="10.8" fill="#e5455e"/><circle cx="1516.6" cy="170.5" r="10.8" fill="#84c814"/></svg>
<div class="t" style="left:1366.6px;width:300px;text-align:center;top:119.8px;font-size:15px;line-height:15px;color:#111;font-weight:bold;">Z</div>
<div class="t" style="left:1323.8px;width:300px;text-align:center;top:163.3px;font-size:15px;line-height:15px;color:#111;font-weight:bold;">X</div>
<div class="t" style="left:1366.6px;width:300px;text-align:center;top:163.3px;font-size:15px;line-height:15px;color:#111;font-weight:bold;">Y</div>
<div class="r" style="left:1536px;top:227px;width:34px;height:34px;border-radius:17px;background:rgba(40,40,40,0.55)"></div>
<div class="r" style="left:1536px;top:267px;width:34px;height:34px;border-radius:17px;background:rgba(40,40,40,0.55)"></div>
<div class="r" style="left:1536px;top:307px;width:34px;height:34px;border-radius:17px;background:rgba(40,40,40,0.55)"></div>
<div class="r" style="left:1536px;top:347px;width:34px;height:34px;border-radius:17px;background:rgba(40,40,40,0.55)"></div>
<svg class="r" style="left:1536px;top:227px;" width="34" height="160" viewBox="0 0 34 160"><circle cx="19" cy="14" r="7" fill="none" stroke="#eee" stroke-width="2"/><path d="M19 10V18 M15 14H23" stroke="#eee" stroke-width="1.6"/><path d="M14 19 L7 26" stroke="#eee" stroke-width="3" stroke-linecap="round"/><path d="M9 57 Q8 48 10 46 Q12 46 12 52 V44 Q12 42 14 42 Q16 42 16 44 V51 V42 Q16 40 18 40 Q20 40 20 42 V51 V43 Q20 41 22 41 Q24 41 24 43 V52 L26 48 Q28 47 28 49 L25 58 Q23 64 16 64 Q10 63 9 57Z" fill="#eee"/><circle cx="12" cy="92" r="5" fill="#eee"/><circle cx="21" cy="91" r="5" fill="#eee"/><rect x="9" y="97" width="14" height="9" fill="#eee"/><path d="M23 101 L29 97 V106Z" fill="#eee"/><circle cx="12" cy="92" r="1.5" fill="#333"/><circle cx="21" cy="91" r="1.5" fill="#333"/><rect x="7.5" y="126.5" width="21" height="21" fill="none" stroke="#eee" stroke-width="2"/><path d="M14.5 127V147 M21.5 127V147 M8 133.5H28 M8 140.5H28" stroke="#eee" stroke-width="1.6"/></svg>
<svg class="r" style="left:1574.5px;top:125.5px;" width="10" height="14" viewBox="0 0 10 14"><path d="M7 2 L2 7 L7 12" stroke="#aaa" stroke-width="1.4" fill="none"/></svg>
<div class="r" style="left:1588px;top:35px;width:330px;height:317px;background:#282828;border-radius:7px;"></div>
<div class="r" style="left:1599px;top:38px;width:40px;height:26px;background:#282828;border-radius:5px;box-shadow:inset 0 0 0 1px #3a3a3a;"></div>
<svg class="r" style="left:1599px;top:38px;" width="40" height="26" viewBox="0 0 40 26"><rect x="7" y="6" width="7" height="4" fill="#ddd"/><path d="M10 10 V21 H13 M10 15 H13" stroke="#ccc" stroke-width="1.2" fill="none"/><rect x="15" y="13" width="9" height="4" fill="#ddd"/><rect x="15" y="19" width="9" height="4" fill="#ddd"/><path d="M28.5 10.75L33 15.25L37.5 10.75" stroke="#d0d0d0" stroke-width="1.6" fill="none" stroke-linecap="round" stroke-linejoin="round"/></svg>
<div class="r" style="left:1647px;top:38px;width:42px;height:26px;background:#282828;border-radius:5px;box-shadow:inset 0 0 0 1px #3a3a3a;"></div>
<svg class="r" style="left:1647px;top:38px;" width="42" height="26" viewBox="0 0 42 26"><path d="M6 9 V22 H17 M8.5 7 V19.5 H19" fill="none" stroke="#ddd" stroke-width="1.2"/><rect x="11" y="4" width="11" height="13" fill="none" stroke="#ddd" stroke-width="1.5"/><path d="M12 16 L16 9 L20 16Z" fill="#ddd"/><circle cx="19" cy="7.5" r="1.3" fill="#ddd"/><path d="M29.5 10.75L34 15.25L38.5 10.75" stroke="#d0d0d0" stroke-width="1.6" fill="none" stroke-linecap="round" stroke-linejoin="round"/></svg>
<div class="r" style="left:1712px;top:38px;width:154px;height:26px;background:#1d1d1d;border-radius:6px;box-shadow:inset 0 0 0 1px #2e2e2e;"></div>
<svg class="r" style="left:1716px;top:38px;" width="30" height="26" viewBox="0 0 30 26"><circle cx="15" cy="10" r="5.5" fill="none" stroke="#ddd" stroke-width="1.5"/><path d="M11 14 L5 21" stroke="#ddd" stroke-width="1.5"/></svg>
<div class="r" style="left:1889px;top:38px;width:29px;height:26px;background:#2a2a2a;border-radius:5px;"></div>
<svg class="r" style="left:1889px;top:38px;" width="29" height="26" viewBox="0 0 29 26"><path d="M3 5 H20 L14 12 V21 L10 18 V12 Z" fill="none" stroke="#ddd" stroke-width="1.5" stroke-linejoin="round"/></svg>
<div class="r" style="left:1626px;top:77px;width:1px;height:275px;background:#4a4a4a;border-radius:0px;"></div>
<div class="r" style="left:1645px;top:68px;width:25px;height:3px;background:#3a3a3a;border-radius:2px;"></div>
<div class="t" style="left:1699.5px;top:77.5px;font-size:16px;line-height:16px;color:#8c8c8c;">Area</div>
<div class="t" style="left:1699.5px;top:104.2px;font-size:16px;line-height:16px;color:#8c8c8c;">Area.001</div>
<div class="t" style="left:1699.5px;top:131.0px;font-size:16px;line-height:16px;color:#8c8c8c;">Area.002</div>
<div class="t" style="left:1699.5px;top:157.7px;font-size:16px;line-height:16px;color:#8c8c8c;">Area.003</div>
<div class="t" style="left:1699.5px;top:184.5px;font-size:16px;line-height:16px;color:#8c8c8c;">Camera</div>
<div class="r" style="left:1588px;top:205px;width:330px;height:26.599999999999994px;background:#334d80;border-radius:0px;"></div>
<div class="t" style="left:1699.5px;top:211.2px;font-size:16px;line-height:16px;color:#ffaf29;">Cube</div>
<div class="t" style="left:1699.5px;top:238.0px;font-size:16px;line-height:16px;color:#8c8c8c;">Empty</div>
<div class="t" style="left:1699.5px;top:264.7px;font-size:16px;line-height:16px;color:#e6e6e6;">Empty.001</div>
<div class="t" style="left:1699.5px;top:291.5px;font-size:16px;line-height:16px;color:#e6e6e6;">insect body 02</div>
<div class="t" style="left:1699.5px;top:318.2px;font-size:16px;line-height:16px;color:#e6e6e6;">insect head 01</div>
<div class="t" style="left:1699.5px;top:345.0px;font-size:16px;line-height:16px;color:#8c8c8c;clip-path:inset(0 0 9px 0);">mutheather plake</div>
<svg class="r" style="left:0px;top:0px;overflow:hidden;height:352px" width="1920" height="352" viewBox="0 0 1920 352"><path d="M1649 80.5 L1658 85.5 L1649 90.5Z" fill="#9a9a9a" opacity="0.8"/><g opacity="0.78"><circle cx="1680" cy="82.5" r="8" fill="#c98a4b"/><rect x="1675" y="88.5" width="10" height="3" fill="#c98a4b"/><rect x="1675.5" y="92.0" width="9" height="2" fill="#c98a4b"/><path d="M1677 94.5 H1683 L1680 96.5Z" fill="#c98a4b"/><path d="M1676 80.5H1684 M1677 79.5V86.5 M1683 79.5V86.5" stroke="#3a2a1a" stroke-width="1.4"/></g><g opacity="0.85"><path d="M1765 75.5 L1774 74.5 L1782 90.5 L1773 91.5Z" stroke="#2ba37a" stroke-width="1.7" fill="none" stroke-linejoin="round"/><path d="M1773 83.5 L1765 93.5" stroke="#2ba37a" stroke-width="1.6" stroke-dasharray="2.5 2"/><circle cx="1773" cy="83.5" r="1.6" fill="#2ba37a"/></g><path d="M1856 84.5 Q1865 93.5 1874 84.5" stroke="#cfcfcf" stroke-width="1.5" fill="none"/><path d="M1883 79.0 H1888 L1890 76.0 H1895 L1897 79.0 H1901 V91.3 H1883Z" fill="#eee"/><circle cx="1892" cy="85.0" r="4.2" fill="none" stroke="#282828" stroke-width="1.7"/><circle cx="1892" cy="85.0" r="1.6" fill="#282828"/><path d="M1649 107.25 L1658 112.25 L1649 117.25Z" fill="#9a9a9a" opacity="0.8"/><g opacity="0.78"><circle cx="1680" cy="109.25" r="8" fill="#c98a4b"/><rect x="1675" y="115.25" width="10" height="3" fill="#c98a4b"/><rect x="1675.5" y="118.75" width="9" height="2" fill="#c98a4b"/><path d="M1677 121.25 H1683 L1680 123.25Z" fill="#c98a4b"/><path d="M1676 107.25H1684 M1677 106.25V113.25 M1683 106.25V113.25" stroke="#3a2a1a" stroke-width="1.4"/></g><g opacity="0.85"><path d="M1798 102.25 L1807 101.25 L1815 117.25 L1806 118.25Z" stroke="#2ba37a" stroke-width="1.7" fill="none" stroke-linejoin="round"/><path d="M1806 110.25 L1798 120.25" stroke="#2ba37a" stroke-width="1.6" stroke-dasharray="2.5 2"/><circle cx="1806" cy="110.25" r="1.6" fill="#2ba37a"/></g><path d="M1856 111.25 Q1865 120.25 1874 111.25" stroke="#cfcfcf" stroke-width="1.5" fill="none"/><path d="M1883 105.75 H1888 L1890 102.75 H1895 L1897 105.75 H1901 V118.05 H1883Z" fill="#eee"/><circle cx="1892" cy="111.75" r="4.2" fill="none" stroke="#282828" stroke-width="1.7"/><circle cx="1892" cy="111.75" r="1.6" fill="#282828"/><path d="M1649 134.0 L1658 139.0 L1649 144.0Z" fill="#9a9a9a" opacity="0.8"/><g opacity="0.78"><circle cx="1680" cy="136.0" r="8" fill="#c98a4b"/><rect x="1675" y="142.0" width="10" height="3" fill="#c98a4b"/><rect x="1675.5" y="145.5" width="9" height="2" fill="#c98a4b"/><path d="M1677 148.0 H1683 L1680 150.0Z" fill="#c98a4b"/><path d="M1676 134.0H1684 M1677 133.0V140.0 M1683 133.0V140.0" stroke="#3a2a1a" stroke-width="1.4"/></g><g opacity="0.85"><path d="M1798 129.0 L1807 128.0 L1815 144.0 L1806 145.0Z" stroke="#2ba37a" stroke-width="1.7" fill="none" stroke-linejoin="round"/><path d="M1806 137.0 L1798 147.0" stroke="#2ba37a" stroke-width="1.6" stroke-dasharray="2.5 2"/><circle cx="1806" cy="137.0" r="1.6" fill="#2ba37a"/></g><path d="M1856 138.0 Q1865 147.0 1874 138.0" stroke="#cfcfcf" stroke-width="1.5" fill="none"/><path d="M1883 132.5 H1888 L1890 129.5 H1895 L1897 132.5 H1901 V144.8 H1883Z" fill="#eee"/><circle cx="1892" cy="138.5" r="4.2" fill="none" stroke="#282828" stroke-width="1.7"/><circle cx="1892" cy="138.5" r="1.6" fill="#282828"/><path d="M1649 160.75 L1658 165.75 L1649 170.75Z" fill="#9a9a9a" opacity="0.8"/><g opacity="0.78"><circle cx="1680" cy="162.75" r="8" fill="#c98a4b"/><rect x="1675" y="168.75" width="10" height="3" fill="#c98a4b"/><rect x="1675.5" y="172.25" width="9" height="2" fill="#c98a4b"/><path d="M1677 174.75 H1683 L1680 176.75Z" fill="#c98a4b"/><path d="M1676 160.75H1684 M1677 159.75V166.75 M1683 159.75V166.75" stroke="#3a2a1a" stroke-width="1.4"/></g><g opacity="0.85"><path d="M1798 155.75 L1807 154.75 L1815 170.75 L1806 171.75Z" stroke="#2ba37a" stroke-width="1.7" fill="none" stroke-linejoin="round"/><path d="M1806 163.75 L1798 173.75" stroke="#2ba37a" stroke-width="1.6" stroke-dasharray="2.5 2"/><circle cx="1806" cy="163.75" r="1.6" fill="#2ba37a"/></g><path d="M1856 164.75 Q1865 173.75 1874 164.75" stroke="#cfcfcf" stroke-width="1.5" fill="none"/><path d="M1883 159.25 H1888 L1890 156.25 H1895 L1897 159.25 H1901 V171.55 H1883Z" fill="none" stroke="#ddd" stroke-width="1.4"/><path d="M1889 162.75 L1895 168.75 M1895 162.75 L1889 168.75" stroke="#ddd" stroke-width="1.4"/><path d="M1649 187.5 L1658 192.5 L1649 197.5Z" fill="#9a9a9a" opacity="0.8"/><g opacity="0.75"><circle cx="1677" cy="188.5" r="4.5" fill="#c98a4b"/><circle cx="1684" cy="187.5" r="4.5" fill="#c98a4b"/><rect x="1675" y="193.5" width="10" height="7" fill="#c98a4b"/><path d="M1685 196.5 L1690 193.5 V200.5Z" fill="#c98a4b"/></g><rect x="1783" y="180.5" width="25" height="24" rx="6" fill="#5a5a5a" opacity="0.8"/><g opacity="0.7"><circle cx="1792" cy="188.5" r="3.5" fill="none" stroke="#2ba37a" stroke-width="1.4"/><circle cx="1799" cy="187.5" r="3.5" fill="none" stroke="#2ba37a" stroke-width="1.4"/><rect x="1789" y="193.5" width="11" height="6" fill="none" stroke="#2ba37a" stroke-width="1.4"/></g><path d="M1856 191.5 Q1865 200.5 1874 191.5" stroke="#cfcfcf" stroke-width="1.5" fill="none"/><path d="M1883 186.0 H1888 L1890 183.0 H1895 L1897 186.0 H1901 V198.3 H1883Z" fill="none" stroke="#ddd" stroke-width="1.4"/><path d="M1889 189.5 L1895 195.5 M1895 189.5 L1889 195.5" stroke="#ddd" stroke-width="1.4"/><path d="M1649 214.25 L1658 219.25 L1649 224.25Z" fill="#9a9a9a" opacity="1"/><rect x="1669" y="206.25" width="23" height="25" rx="6" fill="#6a7a9a" opacity="0.6"/><rect x="1762" y="206.25" width="27" height="25" rx="6" fill="#2a6a8a" opacity="0.8"/><path d="M1768 212.25 H1783 L1775.5 226.25Z" fill="none" stroke="#2bd0c0" stroke-width="1.6"/><g fill="#2a6a8a" stroke="#2bd0c0" stroke-width="1.4"><rect x="1766" y="210.25" width="4" height="4"/><rect x="1781" y="210.25" width="4" height="4"/><rect x="1773.5" y="224.25" width="4" height="4"/></g><path d="M1671 211.25 H1689 L1680 228.25Z" fill="none" stroke="#e8a050" stroke-width="3.2" stroke-linejoin="round" opacity="1"/><path d="M1855 217.75 Q1865 208.25 1875 217.75 Q1865 227.25 1855 217.75Z" fill="none" stroke="#eee" stroke-width="2"/><circle cx="1865" cy="217.75" r="3.2" fill="#eee"/><path d="M1883 212.75 H1888 L1890 209.75 H1895 L1897 212.75 H1901 V225.05 H1883Z" fill="#eee"/><circle cx="1892" cy="218.75" r="4.2" fill="none" stroke="#282828" stroke-width="1.7"/><circle cx="1892" cy="218.75" r="1.6" fill="#282828"/><path d="M1649 241.0 L1658 246.0 L1649 251.0Z" fill="#9a9a9a" opacity="0.8"/><g opacity="0.6"><rect x="1671" y="237.0" width="19" height="19" fill="#e8a050"/><path d="M1673 254.0 L1679 244.0 L1685 254.0Z" fill="#222"/><circle cx="1685" cy="242.0" r="1.8" fill="#222"/></g><g opacity="0.6"><path d="M1777 237.0 V256.0 H1782 M1777 237.0 H1794 V249.0" stroke="#d05a6a" stroke-width="1.5" fill="none"/><path d="M1779 254.0 L1784 246.0 L1789 254.0Z" fill="#d05a6a"/><circle cx="1789" cy="242.0" r="1.6" fill="#d05a6a"/></g><path d="M1856 245.0 Q1865 254.0 1874 245.0" stroke="#cfcfcf" stroke-width="1.5" fill="none"/><path d="M1883 239.5 H1888 L1890 236.5 H1895 L1897 239.5 H1901 V251.8 H1883Z" fill="none" stroke="#ddd" stroke-width="1.4"/><path d="M1889 243.0 L1895 249.0 M1895 243.0 L1889 249.0" stroke="#ddd" stroke-width="1.4"/><path d="M1649 267.75 L1658 272.75 L1649 277.75Z" fill="#9a9a9a" opacity="1"/><g opacity="1"><rect x="1671" y="263.75" width="19" height="19" fill="#e8a050"/><path d="M1673 280.75 L1679 270.75 L1685 280.75Z" fill="#222"/><circle cx="1685" cy="268.75" r="1.8" fill="#222"/></g><g opacity="0.9"><path d="M1808 263.75 V282.75 H1813 M1808 263.75 H1825 V275.75" stroke="#d05a6a" stroke-width="1.5" fill="none"/><path d="M1810 280.75 L1815 272.75 L1820 280.75Z" fill="#d05a6a"/><circle cx="1820" cy="268.75" r="1.6" fill="#d05a6a"/></g><path d="M1855 271.25 Q1865 261.75 1875 271.25 Q1865 280.75 1855 271.25Z" fill="none" stroke="#eee" stroke-width="2"/><circle cx="1865" cy="271.25" r="3.2" fill="#eee"/><path d="M1883 266.25 H1888 L1890 263.25 H1895 L1897 266.25 H1901 V278.55 H1883Z" fill="#eee"/><circle cx="1892" cy="272.25" r="4.2" fill="none" stroke="#282828" stroke-width="1.7"/><circle cx="1892" cy="272.25" r="1.6" fill="#282828"/><path d="M1649 294.5 L1658 299.5 L1649 304.5Z" fill="#9a9a9a" opacity="1"/><path d="M1671 291.5 H1689 L1680 308.5Z" fill="none" stroke="#e8a050" stroke-width="3.2" stroke-linejoin="round" opacity="1"/><path d="M1855 298.0 Q1865 288.5 1875 298.0 Q1865 307.5 1855 298.0Z" fill="none" stroke="#eee" stroke-width="2"/><circle cx="1865" cy="298.0" r="3.2" fill="#eee"/><path d="M1883 293.0 H1888 L1890 290.0 H1895 L1897 293.0 H1901 V305.3 H1883Z" fill="#eee"/><circle cx="1892" cy="299.0" r="4.2" fill="none" stroke="#282828" stroke-width="1.7"/><circle cx="1892" cy="299.0" r="1.6" fill="#282828"/><path d="M1649 321.25 L1658 326.25 L1649 331.25Z" fill="#9a9a9a" opacity="1"/><path d="M1671 318.25 H1689 L1680 335.25Z" fill="none" stroke="#e8a050" stroke-width="3.2" stroke-linejoin="round" opacity="1"/><path d="M1855 324.75 Q1865 315.25 1875 324.75 Q1865 334.25 1855 324.75Z" fill="none" stroke="#eee" stroke-width="2"/><circle cx="1865" cy="324.75" r="3.2" fill="#eee"/><path d="M1883 319.75 H1888 L1890 316.75 H1895 L1897 319.75 H1901 V332.05 H1883Z" fill="#eee"/><circle cx="1892" cy="325.75" r="4.2" fill="none" stroke="#282828" stroke-width="1.7"/><circle cx="1892" cy="325.75" r="1.6" fill="#282828"/><path d="M1649 348.0 L1658 353.0 L1649 358.0Z" fill="#9a9a9a" opacity="0.8"/><path d="M1671 345.0 H1689 L1680 362.0Z" fill="none" stroke="#e8a050" stroke-width="3.2" stroke-linejoin="round" opacity="0.6"/><path d="M1856 352.0 Q1865 361.0 1874 352.0" stroke="#cfcfcf" stroke-width="1.5" fill="none"/><path d="M1883 346.5 H1888 L1890 343.5 H1895 L1897 346.5 H1901 V358.8 H1883Z" fill="none" stroke="#ddd" stroke-width="1.4"/><path d="M1889 350.0 L1895 356.0 M1895 350.0 L1889 356.0" stroke="#ddd" stroke-width="1.4"/><g fill="none" stroke="#ddd" stroke-width="1.3"><rect x="1593" y="212" width="14" height="12"/></g><g fill="#334d80" stroke="#ddd" stroke-width="1.3"><circle cx="1593" cy="212" r="2"/><circle cx="1593" cy="224" r="2"/><circle cx="1607" cy="224" r="2"/></g><rect x="1603" y="207" width="7" height="7" fill="#eee"/><circle cx="1600" cy="298.5" r="3" fill="#eee"/><circle cx="1600" cy="325.25" r="3" fill="#eee"/><circle cx="1600" cy="352" r="3" fill="#eee"/></svg>
<div class="r" style="left:1588px;top:340px;width:330px;height:12px;background:rgba(40,40,40,0.5);border-radius:0px;"></div>
<div class="r" style="left:1912px;top:190px;width:3px;height:130px;background:#3a3a3a;border-radius:2px;"></div>
<div class="r" style="left:1588px;top:357px;width:330px;height:672px;background:#2e2e2e;border-radius:7px;"></div>
<div class="r" style="left:1588px;top:357px;width:330px;height:33px;background:#303030;border-radius:7px;border-bottom-left-radius:0;border-bottom-right-radius:0;"></div>
<div class="r" style="left:1588px;top:391px;width:36px;height:638px;background:#1f1f1f;border-radius:0px;border-bottom-left-radius:7px;"></div>
<div class="r" style="left:1599px;top:361px;width:41px;height:25px;background:#282828;border-radius:5px;"></div>
<svg class="r" style="left:1599px;top:361px;" width="41" height="25" viewBox="0 0 41 25"><rect x="6" y="5" width="16" height="7" rx="3.5" fill="#eee"/><rect x="14" y="6.5" width="7" height="4" rx="1.5" fill="#222"/><rect x="6" y="14" width="16" height="7" rx="3.5" fill="#eee"/><rect x="17" y="15.5" width="4" height="4" rx="1" fill="#222"/><path d="M27.5 10.75L32 15.25L36.5 10.75" stroke="#d0d0d0" stroke-width="1.6" fill="none" stroke-linecap="round" stroke-linejoin="round"/></svg>
<div class="r" style="left:1678px;top:361px;width:154px;height:25px;background:#1d1d1d;border-radius:6px;"></div>
<svg class="r" style="left:1682px;top:361px;" width="30" height="25" viewBox="0 0 30 25"><circle cx="15" cy="10" r="5.5" fill="none" stroke="#ddd" stroke-width="1.5"/><path d="M11 14 L5 21" stroke="#ddd" stroke-width="1.5"/></svg>
<div class="r" style="left:1883px;top:361px;width:24px;height:25px;background:#282828;border-radius:5px;"></div>
<svg class="r" style="left:1883px;top:361px;" width="24" height="25" viewBox="0 0 24 25"><path d="M7.5 10.75L12 15.25L16.5 10.75" stroke="#d0d0d0" stroke-width="1.6" fill="none" stroke-linecap="round" stroke-linejoin="round"/></svg>
<div class="r" style="left:1590px;top:922px;width:34px;height:34px;background:#2e2e2e;border-radius:5px;border-top-right-radius:0;border-bottom-right-radius:0;"></div>
<svg class="r" style="left:0px;top:0px;" width="1920" height="1051" viewBox="0 0 1920 1051"><g transform="translate(1607,419)"><path d="M-6 -10 V-2 M4 10 V-3 M0 -9 Q4 -12 8 -9 L6 -5 H2 L0 -9" stroke="#ddd" stroke-width="2" fill="none"/><circle cx="-6" cy="4" r="4" fill="#ddd"/></g><g transform="translate(1607,467)"><rect x="-10" y="-6" width="19" height="14" fill="none" stroke="#ddd" stroke-width="1.6"/><rect x="-6" y="-9" width="6" height="3" fill="#ddd"/><path d="M-6 -1 H5 M-6 3 H5" stroke="#ddd" stroke-width="1.2"/></g><g transform="translate(1607,506)"><rect x="-10" y="-8" width="20" height="6" fill="#ddd"/><rect x="-6" y="-2" width="12" height="10" fill="none" stroke="#ddd" stroke-width="1.6"/><path d="M-3 6 L0 1 L3 6Z" fill="#ddd"/></g><g transform="translate(1607,542)"><path d="M-9 -3 V10 H4 M-6.5 -6 V7 H7" fill="none" stroke="#ddd" stroke-width="1.2"/><rect x="-4" y="-9" width="13" height="13" fill="none" stroke="#ddd" stroke-width="1.6"/><path d="M-3 3 L2 -4 L7 3Z" fill="#ddd"/></g><g transform="translate(1607,580)"><path d="M-9 6 L-4 -8 L0 6Z" fill="#ddd"/><circle cx="6" cy="-6" r="2.5" fill="#ddd"/><circle cx="3" cy="5" r="5" fill="none" stroke="#ddd" stroke-width="1.6"/></g><g transform="translate(1607,617)"><circle r="9.5" fill="none" stroke="#d05a6a" stroke-width="2"/><path d="M-8 -3 Q-3 -6 -1 -2 Q2 3 -3 5 L-4 9 M3 -9 Q6 -4 9 -3 M4 8 Q5 3 9 2" stroke="#d05a6a" stroke-width="2.2" fill="none"/></g><g transform="translate(1607,667)"><rect x="-9" y="-8" width="18" height="5" fill="none" stroke="#ddd" stroke-width="1.6"/><rect x="-7.5" y="-3" width="15" height="11" fill="none" stroke="#ddd" stroke-width="1.6"/><path d="M-3 1H3" stroke="#ddd" stroke-width="1.6"/></g><g transform="translate(1607.5,714)"><path d="M-10 -6V-10H-6 M6 -10H10V-6 M10 6V10H6 M-6 10H-10V6" fill="none" stroke="#c0803a" stroke-width="1.5"/><rect x="-6.5" y="-6.5" width="13" height="13" fill="#e09a4a"/></g><g transform="translate(1607.5,751)"><path d="M-8 9 L2 -1" stroke="#6b8fe0" stroke-width="4.5" stroke-linecap="round"/><path d="M-1 -3 A6.5 6.5 0 0 0 9 -4 L5 -3 L2 -6 L4 -10 A6.5 6.5 0 0 0 -1 -3Z" fill="#6b8fe0" stroke="#6b8fe0" stroke-width="2" stroke-linejoin="round"/></g><g transform="translate(1607,789)"><circle cx="-6" cy="-6" r="3.5" fill="#6b8fe0"/><circle cx="-6" cy="7" r="2.5" fill="#6b8fe0"/><circle cx="7" cy="7" r="2.5" fill="#6b8fe0"/><path d="M-6 -6 V7 M-6 -6 L7 7 M-6 -6 H8 M5 -9 L8 -6 L5 -3" stroke="#6b8fe0" stroke-width="1.6" fill="none"/></g><g transform="translate(1607,826)"><path d="M5 -8 A9 9 0 1 0 7 6" stroke="#6b8fe0" stroke-width="1.8" fill="none"/><circle cx="0" cy="0" r="4" fill="#6b8fe0"/><circle cx="7" cy="-7" r="2.6" fill="#6b8fe0"/></g><g transform="translate(1607,863)"><path d="M-9 3 Q-9 -5 -1 -8 L8 -10 L7 -2 Q5 8 -3 9 Q-9 9 -9 3Z" fill="none" stroke="#6b8fe0" stroke-width="1.8"/><circle cx="-2" cy="2" r="4" fill="none" stroke="#6b8fe0" stroke-width="2"/><circle cx="-2" cy="2" r="1.3" fill="#6b8fe0"/><circle cx="4" cy="-5" r="1.3" fill="#6b8fe0"/></g><g transform="translate(1607,901)"><path d="M-8 -6 H8 L0 8Z" fill="none" stroke="#2bc08a" stroke-width="1.8"/><g fill="#1f1f1f" stroke="#2bc08a" stroke-width="1.6"><rect x="-10" y="-8" width="4" height="4"/><rect x="6" y="-8" width="4" height="4"/><rect x="-2" y="6" width="4" height="4"/></g></g><g transform="translate(1607.9,938.7)"><circle r="9.4" fill="#e8707e"/><path d="M0 0 V-7.8 A7.8 7.8 0 0 1 7.6 -1.5 Z M0 0 H-7.6 A7.8 7.8 0 0 0 -0.5 7.8Z" fill="#16201e"/></g></svg>
<svg class="r" style="left:1638px;top:403px;" width="24" height="22" viewBox="0 0 24 22"><rect x="5" y="5" width="12" height="12" fill="#e6e6e6"/><path d="M2 6V2H6 M16 2H20V6 M20 16V20H16 M6 20H2V16" stroke="#ccc" stroke-width="1.3" fill="none"/></svg>
<div class="t" style="left:1670.5px;top:406.0px;font-size:16px;line-height:16px;color:#e6e6e6;">Cube</div>
<svg class="r" style="left:1882px;top:402px;" width="26" height="22" viewBox="0 0 26 22"><path d="M5 19 L10 14 M8 9 L14 15 L16 11 L19 8 L14 3 L11 6 Z" fill="none" stroke="#bbb" stroke-width="1.4"/></svg>
<div class="r" style="left:1636px;top:450px;width:235px;height:105px;background:#232323;border-radius:6px;box-shadow:inset 0 0 0 1px #353535;"></div>
<svg class="r" style="left:1645px;top:533px;" width="200" height="16" viewBox="0 0 200 16"><path d="M6 4 L12 8 L6 12Z" fill="#aaa"/><g fill="#bbb"><rect x="115" y="6" width="2" height="2"/><rect x="119" y="6" width="2" height="2"/><rect x="123" y="6" width="2" height="2"/><rect x="127" y="6" width="2" height="2"/><rect x="115" y="10" width="2" height="2"/><rect x="119" y="10" width="2" height="2"/><rect x="123" y="10" width="2" height="2"/><rect x="127" y="10" width="2" height="2"/></g></svg>
<div class="r" style="left:1883px;top:450px;width:26px;height:51px;background:#4a4a4a;border-radius:5px;"></div>
<div class="r" style="left:1883px;top:475px;width:26px;height:1px;background:#3a3a3a;border-radius:0px;"></div>
<svg class="r" style="left:1883px;top:450px;" width="26" height="51" viewBox="0 0 26 51"><path d="M13 6V18 M7 12H19" stroke="#ddd" stroke-width="1.6"/><path d="M7 38H19" stroke="#ddd" stroke-width="1.6"/></svg>
<div class="r" style="left:1883px;top:511px;width:26px;height:26px;background:#282828;border-radius:5px;"></div>
<svg class="r" style="left:1883px;top:511px;" width="26" height="26" viewBox="0 0 26 26"><path d="M8 10.5L13 15.5L18 10.5" stroke="#ddd" stroke-width="1.6" fill="none" stroke-linecap="round" stroke-linejoin="round"/></svg>
<div class="r" style="left:1636px;top:564px;width:273px;height:25px;background:#4a4a4a;border-radius:5px;"></div>
<div class="r" style="left:1636px;top:564px;width:42px;height:25px;background:#282828;border-radius:5px;border-top-right-radius:0;border-bottom-right-radius:0;"></div>
<svg class="r" style="left:1636px;top:564px;" width="42" height="25" viewBox="0 0 42 25"><circle cx="15" cy="12.5" r="8.8" fill="#eee"/><path d="M15 12.5 V5.6 A6.9 6.9 0 0 1 21.9 12.5Z M15 12.5 H8.1 A6.9 6.9 0 0 0 15 19.4Z" fill="#1a1a1a"/><path d="M28.5 11.75L33 16.25L37.5 11.75" stroke="#d0d0d0" stroke-width="1.6" fill="none" stroke-linecap="round" stroke-linejoin="round"/></svg>
<svg class="r" style="left:1680px;top:564px;" width="30" height="25" viewBox="0 0 30 25"><path d="M14 6V19 M7.5 12.5H20.5" stroke="#ddd" stroke-width="1.6"/></svg>
<div class="t" style="left:1655px;width:300px;text-align:center;top:568.0px;font-size:16px;line-height:16px;color:#e6e6e6;">New</div>
<div class="r" style="left:1636px;top:597px;width:273px;height:26px;background:#4a4a4a;border-radius:5px;"></div>
<div class="r" style="left:1726px;top:597px;width:1px;height:26px;background:#3a3a3a;border-radius:0px;"></div>
<div class="r" style="left:1817px;top:597px;width:1px;height:26px;background:#3a3a3a;border-radius:0px;"></div>
<div class="t" style="left:1531px;width:300px;text-align:center;top:601.5px;font-size:16px;line-height:16px;color:#e6e6e6;">Assign</div>
<div class="t" style="left:1621.5px;width:300px;text-align:center;top:601.5px;font-size:16px;line-height:16px;color:#e6e6e6;">Select</div>
<div class="t" style="left:1713px;width:300px;text-align:center;top:601.5px;font-size:16px;line-height:16px;color:#e6e6e6;">Deselect</div>
<div class="r" style="left:0px;top:957px;width:1583px;height:73px;background:#1d1d1d;border-radius:7px;"></div>
<div class="r" style="left:0px;top:957px;width:1583px;height:33px;background:#303030;border-radius:7px;border-bottom-left-radius:0;border-bottom-right-radius:0;"></div>
<div class="r" style="left:6px;top:962px;width:41px;height:23px;background:#282828;border-radius:5px;"></div>
<svg class="r" style="left:6px;top:962px;" width="41" height="23" viewBox="0 0 41 23"><circle cx="15" cy="11.5" r="8.5" fill="#eee"/><path d="M17 6 L12 11.5 L17 17" stroke="#282828" stroke-width="2.2" fill="none"/><path d="M27.5 9.75L32 14.25L36.5 9.75" stroke="#d0d0d0" stroke-width="1.6" fill="none" stroke-linecap="round" stroke-linejoin="round"/></svg>
<div class="r" style="left:55px;top:962px;width:177px;height:23px;background:#282828;border-radius:5px;"></div>
<div class="r" style="left:151px;top:962px;width:1px;height:23px;background:#3a3a3a;border-radius:0px;"></div>
<div class="t" style="left:65px;top:965.5px;font-size:16px;line-height:16px;color:#e6e6e6;">Playback</div>
<svg class="r" style="left:132px;top:962px;" width="20" height="23" viewBox="0 0 20 23"><path d="M5.5 9.75L10 14.25L14.5 9.75" stroke="#d0d0d0" stroke-width="1.6" fill="none" stroke-linecap="round" stroke-linejoin="round"/></svg>
<div class="t" style="left:161px;top:965.5px;font-size:16px;line-height:16px;color:#e6e6e6;">Keying</div>
<svg class="r" style="left:213px;top:962px;" width="20" height="23" viewBox="0 0 20 23"><path d="M5.5 9.75L10 14.25L14.5 9.75" stroke="#d0d0d0" stroke-width="1.6" fill="none" stroke-linecap="round" stroke-linejoin="round"/></svg>
<div class="t" style="left:245.5px;top:965.5px;font-size:16px;line-height:16px;color:#e6e6e6;">View</div>
<div class="t" style="left:300px;top:965.5px;font-size:16px;line-height:16px;color:#e6e6e6;">Marker</div>
<div class="r" style="left:665px;top:962px;width:50px;height:23px;background:#282828;border-radius:5px;"></div>
<div class="r" style="left:665px;top:962px;width:25px;height:23px;background:#4a4a4a;border-radius:5px;border-top-right-radius:0;border-bottom-right-radius:0;"></div>
<svg class="r" style="left:665px;top:962px;" width="50" height="23" viewBox="0 0 50 23"><circle cx="12.5" cy="11.5" r="5.5" fill="#eee"/><path d="M34.5 10.25L38 13.75L41.5 10.25" stroke="#555" stroke-width="1.2" fill="none" stroke-linecap="round" stroke-linejoin="round"/></svg>
<div class="r" style="left:725px;top:962px;width:158px;height:23px;background:#4a4a4a;border-radius:5px;"></div>
<div class="r" style="left:751px;top:962px;width:1px;height:23px;background:#3c3c3c;border-radius:0px;"></div>
<div class="r" style="left:778px;top:962px;width:1px;height:23px;background:#3c3c3c;border-radius:0px;"></div>
<div class="r" style="left:804px;top:962px;width:1px;height:23px;background:#3c3c3c;border-radius:0px;"></div>
<div class="r" style="left:830px;top:962px;width:1px;height:23px;background:#3c3c3c;border-radius:0px;"></div>
<div class="r" style="left:857px;top:962px;width:1px;height:23px;background:#3c3c3c;border-radius:0px;"></div>
<svg class="r" style="left:725px;top:962px;" width="158" height="23" viewBox="0 0 158 23"><path d="M8 6V17" stroke="#eee" stroke-width="2"/><path d="M19 6 L11 11.5 L19 17Z" fill="#eee"/><path d="M33 11.5 L38 6 L43 11.5 L38 17Z" fill="#eee"/><path d="M52 6 L44 11.5 L52 17Z" fill="#eee"/><path d="M71 5 L61 11.5 L71 18Z" fill="#eee"/><path d="M87 5 L97 11.5 L87 18Z" fill="#eee"/><path d="M110 6 L118 11.5 L110 17Z" fill="#eee"/><path d="M119 11.5 L124 6 L129 11.5 L124 17Z" fill="#eee"/><path d="M139 6 L147 11.5 L139 17Z" fill="#eee"/><path d="M149 6V17" stroke="#eee" stroke-width="2"/></svg>
<div class="r" style="left:1206px;top:961px;width:98px;height:25px;background:#4a4a4a;border-radius:5px;"></div>
<div class="t" style="left:1105px;width:300px;text-align:center;top:965.5px;font-size:16px;line-height:16px;color:#e6e6e6;">1</div>
<div class="r" style="left:1313px;top:961px;width:260px;height:25px;background:#4a4a4a;border-radius:5px;"></div>
<div class="r" style="left:1337px;top:961px;width:1px;height:25px;background:#3c3c3c;border-radius:0px;"></div>
<div class="r" style="left:1458px;top:961px;width:1px;height:25px;background:#3c3c3c;border-radius:0px;"></div>
<svg class="r" style="left:1313px;top:961px;" width="25" height="25" viewBox="0 0 25 25"><circle cx="12" cy="14" r="7.5" fill="none" stroke="#eee" stroke-width="1.6"/><path d="M12 14V10 M12 14H15 M10 4H14 M12 4V6.5 M18 7 L20 5" stroke="#eee" stroke-width="1.5" fill="none"/></svg>
<div class="t" style="left:1360px;top:965.5px;font-size:16px;line-height:16px;color:#e6e6e6;">Start</div>
<div class="t" style="left:1141px;width:300px;text-align:right;top:965.5px;font-size:16px;line-height:16px;color:#e6e6e6;">1</div>
<div class="t" style="left:1480px;top:965.5px;font-size:16px;line-height:16px;color:#e6e6e6;">End</div>
<div class="t" style="left:1256px;width:300px;text-align:right;top:965.5px;font-size:16px;line-height:16px;color:#e6e6e6;">250</div>
<div class="r" style="left:0px;top:990px;width:1583px;height:40px;background:#1d1d1d;border-radius:7px;border-top-left-radius:0;border-top-right-radius:0;"></div>
<div class="t" style="left:15.189999999999998px;width:300px;text-align:center;top:997.5px;font-size:16px;line-height:16px;color:#d6d6d6;">20</div>
<div class="t" style="left:133.39px;width:300px;text-align:center;top:997.5px;font-size:16px;line-height:16px;color:#d6d6d6;">40</div>
<div class="t" style="left:251.58999999999997px;width:300px;text-align:center;top:997.5px;font-size:16px;line-height:16px;color:#d6d6d6;">60</div>
<div class="t" style="left:369.78999999999996px;width:300px;text-align:center;top:997.5px;font-size:16px;line-height:16px;color:#d6d6d6;">80</div>
<div class="t" style="left:487.99px;width:300px;text-align:center;top:997.5px;font-size:16px;line-height:16px;color:#d6d6d6;">100</div>
<div class="t" style="left:606.1899999999999px;width:300px;text-align:center;top:997.5px;font-size:16px;line-height:16px;color:#d6d6d6;">120</div>
<div class="t" style="left:724.39px;width:300px;text-align:center;top:997.5px;font-size:16px;line-height:16px;color:#d6d6d6;">140</div>
<div class="t" style="left:842.59px;width:300px;text-align:center;top:997.5px;font-size:16px;line-height:16px;color:#d6d6d6;">160</div>
<div class="t" style="left:960.7900000000002px;width:300px;text-align:center;top:997.5px;font-size:16px;line-height:16px;color:#d6d6d6;">180</div>
<div class="t" style="left:1078.99px;width:300px;text-align:center;top:997.5px;font-size:16px;line-height:16px;color:#d6d6d6;">200</div>
<div class="t" style="left:1197.19px;width:300px;text-align:center;top:997.5px;font-size:16px;line-height:16px;color:#d6d6d6;">220</div>
<div class="t" style="left:1315.39px;width:300px;text-align:center;top:997.5px;font-size:16px;line-height:16px;color:#d6d6d6;">240</div>
<div class="r" style="left:37px;top:995px;width:32px;height:21px;background:#4772b3;border-radius:4px;border-bottom-left-radius:0;border-bottom-right-radius:0;"></div>
<div class="t" style="left:-97px;width:300px;text-align:center;top:997.5px;font-size:16px;line-height:16px;color:#fff;">1</div>
<div class="r" style="left:8px;top:1016px;width:1566px;height:10px;background:#4b4b4b;border-radius:5px;"></div>
<svg class="r" style="left:8px;top:1016px;" width="1566" height="10" viewBox="0 0 1566 10"><circle cx="5" cy="5" r="4" fill="none" stroke="#2a2a2a" stroke-width="2"/><circle cx="1560" cy="5" r="4" fill="none" stroke="#2a2a2a" stroke-width="2"/></svg>
<svg class="r" style="left:0px;top:0px;" width="1583" height="1051" viewBox="0 0 1583 1051"><path d="M106.1 1026V1030 M165.2 1026V1030 M224.3 1026V1030 M283.4 1026V1030 M342.5 1026V1030 M401.6 1026V1030 M460.7 1026V1030 M519.8 1026V1030 M578.9 1026V1030 M638.0 1026V1030 M697.1 1026V1030 M756.2 1026V1030 M815.3 1026V1030 M874.4 1026V1030 M933.5 1026V1030 M992.6 1026V1030 M1051.7 1026V1030 M1110.8 1026V1030 M1169.9 1026V1030 M1229.0 1026V1030 M1288.1 1026V1030 M1347.2 1026V1030 M1406.3 1026V1030 M1465.4 1026V1030 M1524.5 1026V1030 " stroke="#333" stroke-width="1"/><path d="M53 1026V1030" stroke="#4772b3" stroke-width="2"/></svg>
<svg class="r" style="left:1574px;top:1008px;" width="10" height="16" viewBox="0 0 10 16"><path d="M8 3 L3 8 L8 13" stroke="#999" stroke-width="1.4" fill="none"/></svg>
<div class="r" style="left:0px;top:1031px;width:1920px;height:20px;background:#1d1d1d;border-radius:0px;"></div>
<svg class="r" style="left:8px;top:1034px;overflow:hidden" width="16" height="17" viewBox="0 0 16 17"><path d="M3 16 V6 Q3 1 8 1 Q13 1 13 6 V16" stroke="#aaa" stroke-width="1.3" fill="none"/><rect x="3" y="2" width="5" height="7" fill="#aaa"/></svg>
<div class="t" style="left:40px;top:1036.0px;font-size:16px;line-height:16px;color:#a8a8a8;">Pick Shortest Path</div>
<svg class="r" style="left:336px;top:1034px;overflow:hidden" width="16" height="17" viewBox="0 0 16 17"><path d="M3 16 V6 Q3 1 8 1 Q13 1 13 6 V16" stroke="#aaa" stroke-width="1.3" fill="none"/><rect x="6.5" y="3" width="3" height="6" rx="1" fill="#aaa"/></svg>
<div class="t" style="left:366.5px;top:1036.0px;font-size:16px;line-height:16px;color:#a8a8a8;">Dolly View</div>
<svg class="r" style="left:663px;top:1034px;overflow:hidden" width="16" height="17" viewBox="0 0 16 17"><path d="M3 16 V6 Q3 1 8 1 Q13 1 13 6 V16" stroke="#aaa" stroke-width="1.3" fill="none"/><rect x="8" y="2" width="5" height="7" fill="#aaa"/></svg>
<div class="t" style="left:693.5px;top:1036.0px;font-size:16px;line-height:16px;color:#a8a8a8;">Extrude to Cursor or Add</div>
<div class="t" style="left:1607px;width:300px;text-align:right;top:1036.0px;font-size:16px;line-height:16px;color:#a8a8a8;">3.5.1</div>
</body></html>
